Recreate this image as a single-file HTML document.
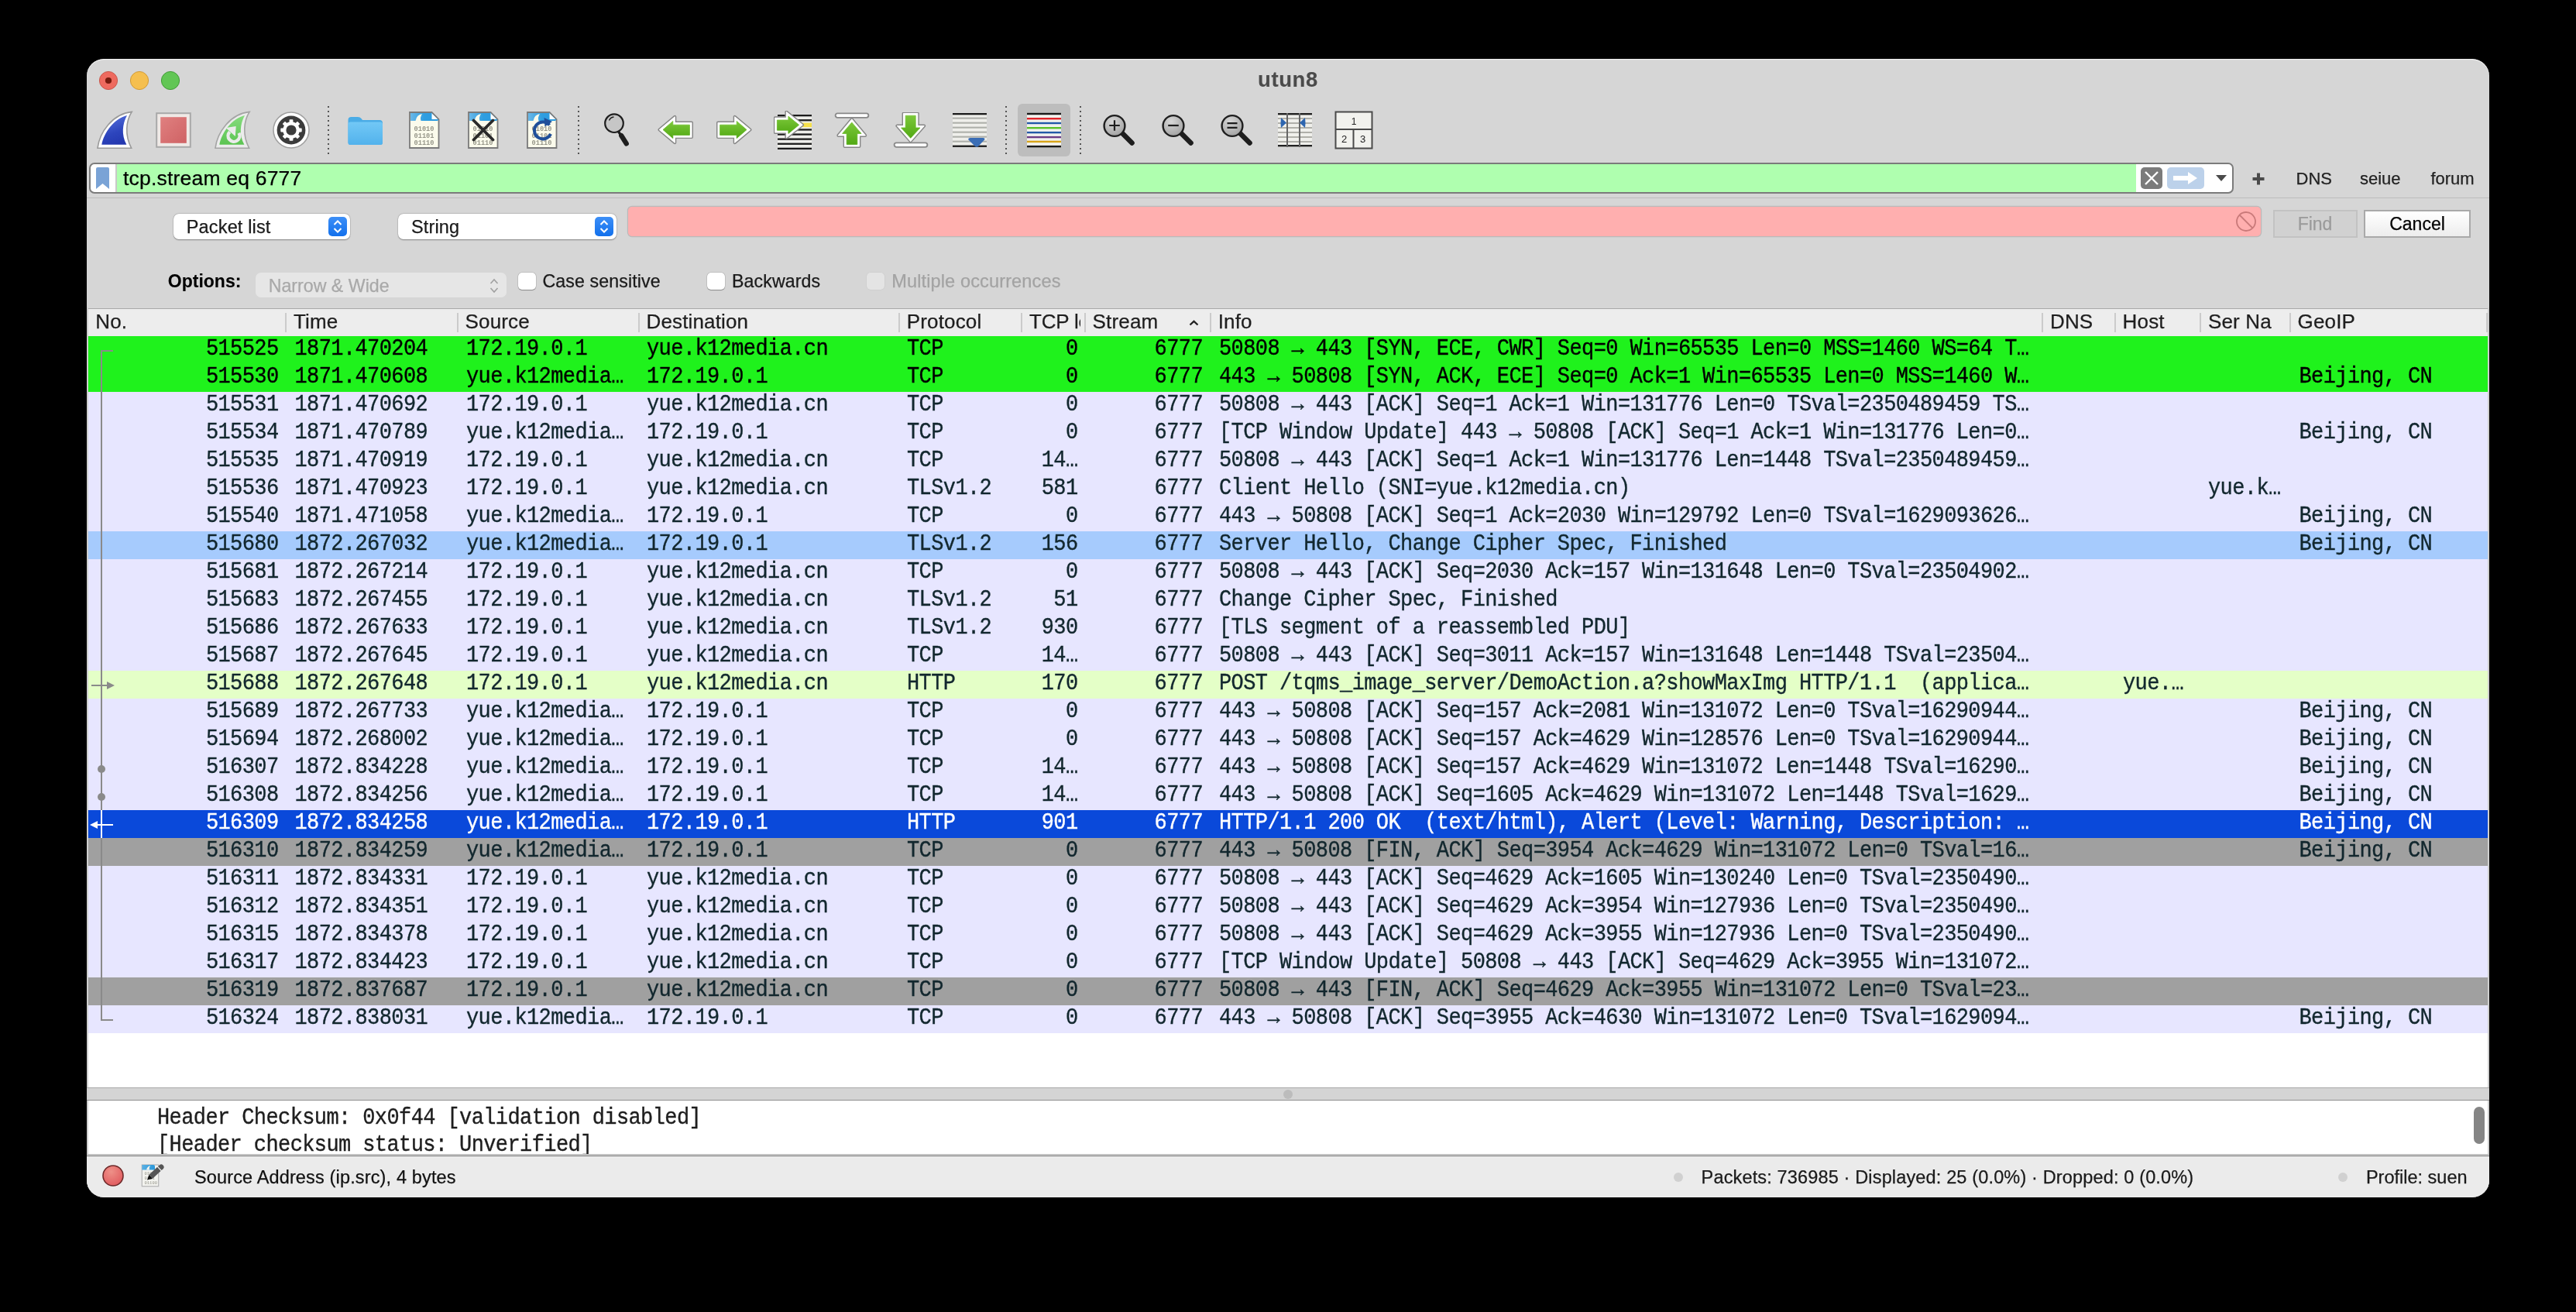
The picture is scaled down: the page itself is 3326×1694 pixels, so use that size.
<!DOCTYPE html>
<html><head><meta charset="utf-8"><title>utun8</title>
<style>
html,body{margin:0;padding:0;background:#000;width:3326px;height:1694px;overflow:hidden}
#win{position:absolute;left:112px;top:76px;width:3102px;height:1470px;background:#d6d6d6;border-radius:22px;overflow:hidden;will-change:transform}
#win div, #win svg{box-sizing:border-box}
</style></head><body>
<div id="win">
<svg style="position:absolute;left:15px;top:15px" width="26" height="26" viewBox="0 0 26 26"><circle cx="13" cy="13" r="11.6" fill="#ee6a5f" stroke="#c9574c" stroke-width="1"/><circle cx="13" cy="13" r="4.1" fill="#761a0e"/></svg>
<svg style="position:absolute;left:55px;top:15px" width="26" height="26" viewBox="0 0 26 26"><circle cx="13" cy="13" r="11.6" fill="#f5bf4f" stroke="#d19a36" stroke-width="1"/></svg>
<svg style="position:absolute;left:95px;top:15px" width="26" height="26" viewBox="0 0 26 26"><circle cx="13" cy="13" r="11.6" fill="#62c655" stroke="#429a37" stroke-width="1"/></svg>
<div style="position:absolute;left:1551px;top:10.71px;font-family:'Liberation Sans', sans-serif;font-size:27.5px;font-weight:700;color:#4b4b4b;letter-spacing:0.6px;white-space:pre;line-height:normal;-webkit-text-stroke:0.1px #4b4b4b;transform:translateX(-50%);">utun8</div>
<div style="position:absolute;left:0px;top:0px;width:3102px;height:44px;border-radius:22px 22px 0 0;box-shadow:inset 0 1.3px 0 #f0f0f0;"></div>
<svg style="position:absolute;left:12px;top:66px" width="50" height="52" viewBox="0 0 50 52">
<defs><linearGradient id="gb" x1="0.3" y1="0" x2="0.6" y2="1"><stop offset="0" stop-color="#5570dc"/><stop offset="0.6" stop-color="#2d45bd"/><stop offset="1" stop-color="#2438b0"/></linearGradient></defs>
<path d="M2 49.2 C4.5 29 21 5 46.2 2.4 C38.5 14 37 33 45.6 49.2 Z" fill="#fff" stroke="#9a9a9a" stroke-width="1.6"/>
<path d="M7.3 44.7 C10 30 23 11 40 7 C34 18 32.5 32 39.4 44.7 Z" fill="url(#gb)"/>
</svg>
<svg style="position:absolute;left:89px;top:69px" width="46" height="46" viewBox="0 0 46 46">
<rect x="1.2" y="1.2" width="43.6" height="43.6" fill="#efe9e6" stroke="#a9a9a9" stroke-width="2"/>
<defs><linearGradient id="gr" x1="0" y1="0" x2="1" y2="1"><stop offset="0" stop-color="#e08080"/><stop offset="1" stop-color="#cf6264"/></linearGradient></defs>
<rect x="6.2" y="6.2" width="33.6" height="33.6" fill="url(#gr)"/>
</svg>
<svg style="position:absolute;left:164px;top:66px" width="50" height="52" viewBox="0 0 50 52">
<defs><linearGradient id="gg" x1="0" y1="0" x2="0" y2="1"><stop offset="0" stop-color="#86dc7e"/><stop offset="1" stop-color="#5cc452"/></linearGradient></defs>
<path d="M2 49.2 C4.5 29 21 5 46.2 2.4 C38.5 14 37 33 45.6 49.2 Z" fill="#ececec" stroke="#a4a4a4" stroke-width="1.6"/>
<path d="M7.3 44.7 C10 30 23 11 40 7 C34 18 32.5 32 39.4 44.7 Z" fill="url(#gg)"/>
<path d="M32.45 29.8 A7.45 7.45 0 1 1 20.7 28.2" fill="none" stroke="#ebebeb" stroke-width="4.3"/>
<path d="M15.5 23 L28.7 20.9 L27.8 34 Z" fill="#ebebeb"/>
</svg>
<svg style="position:absolute;left:240px;top:68px" width="48" height="48" viewBox="0 0 48 48">
<circle cx="24" cy="24" r="23" fill="#fff" stroke="#a0a0a0" stroke-width="1.6"/>
<circle cx="24" cy="24" r="18.4" fill="#3c3c3c"/>
<rect x="21.6" y="10.3" width="4.8" height="6" rx="0.8" fill="#fff" transform="rotate(0 24 24)"/><rect x="21.6" y="10.3" width="4.8" height="6" rx="0.8" fill="#fff" transform="rotate(45 24 24)"/><rect x="21.6" y="10.3" width="4.8" height="6" rx="0.8" fill="#fff" transform="rotate(90 24 24)"/><rect x="21.6" y="10.3" width="4.8" height="6" rx="0.8" fill="#fff" transform="rotate(135 24 24)"/><rect x="21.6" y="10.3" width="4.8" height="6" rx="0.8" fill="#fff" transform="rotate(180 24 24)"/><rect x="21.6" y="10.3" width="4.8" height="6" rx="0.8" fill="#fff" transform="rotate(225 24 24)"/><rect x="21.6" y="10.3" width="4.8" height="6" rx="0.8" fill="#fff" transform="rotate(270 24 24)"/><rect x="21.6" y="10.3" width="4.8" height="6" rx="0.8" fill="#fff" transform="rotate(315 24 24)"/>
<circle cx="24" cy="24" r="10.8" fill="#fff"/>
<circle cx="24" cy="24" r="6.6" fill="#3c3c3c"/>
</svg>
<svg style="position:absolute;left:311px;top:60px" width="2" height="64" viewBox="0 0 2 64"><rect x="0" y="1" width="2" height="2" fill="#555"/><rect x="0" y="7" width="2" height="2" fill="#555"/><rect x="0" y="13" width="2" height="2" fill="#555"/><rect x="0" y="19" width="2" height="2" fill="#555"/><rect x="0" y="25" width="2" height="2" fill="#555"/><rect x="0" y="31" width="2" height="2" fill="#555"/><rect x="0" y="37" width="2" height="2" fill="#555"/><rect x="0" y="43" width="2" height="2" fill="#555"/><rect x="0" y="49" width="2" height="2" fill="#555"/><rect x="0" y="55" width="2" height="2" fill="#555"/><rect x="0" y="61" width="2" height="2" fill="#555"/></svg>
<svg style="position:absolute;left:336px;top:73px" width="48" height="40" viewBox="0 0 48 40">
<defs><linearGradient id="gf" x1="0" y1="0" x2="0" y2="1"><stop offset="0" stop-color="#72c8f6"/><stop offset="1" stop-color="#52b2ec"/></linearGradient></defs>
<path d="M1.5 6 Q1.5 2 5.5 2 L14 2 Q17 2 18.5 4 L20 6 L42 6 Q46 6 46 10 L46 35 Q46 38 43 38 L4.5 38 Q1.5 38 1.5 35 Z" fill="#4aace6"/>
<path d="M1.5 11.5 Q1.5 8.5 4.5 8.5 L43 8.5 Q46 8.5 46 11.5 L46 35 Q46 38 43 38 L4.5 38 Q1.5 38 1.5 35 Z" fill="url(#gf)"/>
</svg>
<svg style="position:absolute;left:416px;top:68px" width="40" height="49" viewBox="0 0 40 49">
<defs><linearGradient id="gfh528" x1="0" y1="0" x2="1" y2="0"><stop offset="0" stop-color="#6ab8e8"/><stop offset="0.5" stop-color="#2f9ee0"/><stop offset="1" stop-color="#2a9ae0"/></linearGradient></defs>
<path d="M1 1 L29.5 1 L38.5 10 L38.5 47 L1 47 Z" fill="#fbfbec" stroke="#7a7a7a" stroke-width="1.8"/>
<path d="M2 2 L29 2 L37.5 10.5 L37.5 12 L2 12 Z" fill="url(#gfh528)"/>
<path d="M29 2 L29 10.5 L37.6 10.5 Z" fill="#fff"/>
<path d="M29 1.5 L29 10.5 L38 10.5" fill="none" stroke="#2f9ee0" stroke-width="1"/>
<path d="M8.5 12 Q10 4 17 3 Q14 7.5 15.5 12 Z" fill="#fbfbec"/>
<g font-family="Liberation Mono" font-size="8.6" font-weight="700" fill="#97978a" text-anchor="middle">
<text x="19.5" y="24.5">01010</text><text x="19.5" y="33.5">01101</text><text x="19.5" y="42.5">01110</text></g>
</svg>
<svg style="position:absolute;left:492px;top:68px" width="40" height="49" viewBox="0 0 40 49">
<defs><linearGradient id="gfh604" x1="0" y1="0" x2="1" y2="0"><stop offset="0" stop-color="#6ab8e8"/><stop offset="0.5" stop-color="#2f9ee0"/><stop offset="1" stop-color="#2a9ae0"/></linearGradient></defs>
<path d="M1 1 L29.5 1 L38.5 10 L38.5 47 L1 47 Z" fill="#fbfbec" stroke="#7a7a7a" stroke-width="1.8"/>
<path d="M2 2 L29 2 L37.5 10.5 L37.5 12 L2 12 Z" fill="url(#gfh604)"/>
<path d="M29 2 L29 10.5 L37.6 10.5 Z" fill="#fff"/>
<path d="M29 1.5 L29 10.5 L38 10.5" fill="none" stroke="#2f9ee0" stroke-width="1"/>
<path d="M8.5 12 Q10 4 17 3 Q14 7.5 15.5 12 Z" fill="#fbfbec"/>
<g font-family="Liberation Mono" font-size="8.6" font-weight="700" fill="#97978a" text-anchor="middle">
<text x="19.5" y="24.5">01010</text><text x="19.5" y="33.5">01101</text><text x="19.5" y="42.5">01110</text></g>
<path d="M7.5 11.5 L32.5 36.5 M32.5 11.5 L7.5 36.5" stroke="#2a2a2a" stroke-width="3.8" stroke-linecap="round"/></svg>
<svg style="position:absolute;left:568px;top:68px" width="40" height="49" viewBox="0 0 40 49">
<defs><linearGradient id="gfh680" x1="0" y1="0" x2="1" y2="0"><stop offset="0" stop-color="#6ab8e8"/><stop offset="0.5" stop-color="#2f9ee0"/><stop offset="1" stop-color="#2a9ae0"/></linearGradient></defs>
<path d="M1 1 L29.5 1 L38.5 10 L38.5 47 L1 47 Z" fill="#fbfbec" stroke="#7a7a7a" stroke-width="1.8"/>
<path d="M2 2 L29 2 L37.5 10.5 L37.5 12 L2 12 Z" fill="url(#gfh680)"/>
<path d="M29 2 L29 10.5 L37.6 10.5 Z" fill="#fff"/>
<path d="M29 1.5 L29 10.5 L38 10.5" fill="none" stroke="#2f9ee0" stroke-width="1"/>
<path d="M8.5 12 Q10 4 17 3 Q14 7.5 15.5 12 Z" fill="#fbfbec"/>
<g font-family="Liberation Mono" font-size="8.6" font-weight="700" fill="#97978a" text-anchor="middle">
<text x="19.5" y="24.5">01010</text><text x="19.5" y="33.5">01101</text><text x="19.5" y="42.5">01110</text></g>
<path d="M29.5 17.5 A11 11 0 1 0 31 29" fill="none" stroke="#1f4f9a" stroke-width="4"/><path d="M22.5 8 L33 13 L23.5 19.5 Z" fill="#1f4f9a"/></svg>
<svg style="position:absolute;left:634px;top:60px" width="2" height="64" viewBox="0 0 2 64"><rect x="0" y="1" width="2" height="2" fill="#555"/><rect x="0" y="7" width="2" height="2" fill="#555"/><rect x="0" y="13" width="2" height="2" fill="#555"/><rect x="0" y="19" width="2" height="2" fill="#555"/><rect x="0" y="25" width="2" height="2" fill="#555"/><rect x="0" y="31" width="2" height="2" fill="#555"/><rect x="0" y="37" width="2" height="2" fill="#555"/><rect x="0" y="43" width="2" height="2" fill="#555"/><rect x="0" y="49" width="2" height="2" fill="#555"/><rect x="0" y="55" width="2" height="2" fill="#555"/><rect x="0" y="61" width="2" height="2" fill="#555"/></svg>
<svg style="position:absolute;left:666px;top:69px" width="36" height="46" viewBox="0 0 36 46">
<circle cx="15" cy="14.2" r="11.8" fill="#c6c6c6" stroke="#1e1e1e" stroke-width="2.2"/>
<path d="M8.5 10.5 Q10 6.5 14.5 6" stroke="#1e1e1e" stroke-width="1.4" fill="none"/>
<path d="M20.5 25 L23 28.5" stroke="#1e1e1e" stroke-width="3.2"/>
<path d="M24.2 30 L30.8 40.5" stroke="#1e1e1e" stroke-width="6.2" stroke-linecap="round"/>
</svg>
<svg style="position:absolute;left:737px;top:72px" width="46" height="39" viewBox="0 0 46 39"><defs><linearGradient id="gal" x1="0" y1="0" x2="0" y2="1"><stop offset="0" stop-color="#7cc83a"/><stop offset="1" stop-color="#52a914"/></linearGradient></defs><path d="M2.5 19.5 L22.3 2.8 L22.3 10.5 L44 10.5 L44 29.1 L22.3 29.1 L22.3 36.2 Z" fill="#fff" stroke="#868686" stroke-width="4" stroke-linejoin="round"/><path d="M2.5 19.5 L22.3 2.8 L22.3 10.5 L44 10.5 L44 29.1 L22.3 29.1 L22.3 36.2 Z" fill="#fff" stroke="#fff" stroke-width="1.1" stroke-linejoin="round"/><path d="M7 19.5 L19.8 8.4 L19.8 13.2 L41.4 13.2 L41.4 26.4 L19.8 26.4 L19.8 30.6 Z" fill="url(#gal)" stroke="url(#gal)" stroke-width="0.8" stroke-linejoin="round"/></svg>
<svg style="position:absolute;left:813px;top:72px" width="46" height="39" viewBox="0 0 46 39"><defs><linearGradient id="gar" x1="0" y1="0" x2="0" y2="1"><stop offset="0" stop-color="#7cc83a"/><stop offset="1" stop-color="#52a914"/></linearGradient></defs><path d="M43.5 19.5 L23.7 2.8 L23.7 10.5 L2 10.5 L2 29.1 L23.7 29.1 L23.7 36.2 Z" fill="#fff" stroke="#868686" stroke-width="4" stroke-linejoin="round"/><path d="M43.5 19.5 L23.7 2.8 L23.7 10.5 L2 10.5 L2 29.1 L23.7 29.1 L23.7 36.2 Z" fill="#fff" stroke="#fff" stroke-width="1.1" stroke-linejoin="round"/><path d="M39 19.5 L26.2 8.4 L26.2 13.2 L4.6 13.2 L4.6 26.4 L26.2 26.4 L26.2 30.6 Z" fill="url(#gar)" stroke="url(#gar)" stroke-width="0.8" stroke-linejoin="round"/></svg>
<svg style="position:absolute;left:887px;top:67px" width="50" height="50" viewBox="0 0 50 50"><defs><linearGradient id="gap" x1="0" y1="0" x2="0" y2="1"><stop offset="0" stop-color="#7cc83a"/><stop offset="1" stop-color="#52a914"/></linearGradient></defs><rect x="5" y="5" width="44" height="44.5" fill="#eeeeea"/><rect x="5" y="5.0" width="44" height="2.3" fill="#1c1c1c"/><rect x="5" y="11.1" width="44" height="2.3" fill="#1c1c1c"/><rect x="5" y="23.3" width="44" height="2.3" fill="#1c1c1c"/><rect x="5" y="29.4" width="44" height="2.3" fill="#1c1c1c"/><rect x="5" y="35.5" width="44" height="2.3" fill="#1c1c1c"/><rect x="5" y="41.6" width="44" height="2.3" fill="#1c1c1c"/><rect x="5" y="47.7" width="44" height="2.3" fill="#1c1c1c"/><rect x="37" y="15.6" width="12" height="5.6" fill="#f6e04a"/><path d="M37 18.3 L16.4 1.6 L16.4 9.3 L1.8 9.3 L1.8 27.9 L16.4 27.9 L16.4 34.6 Z" fill="#fff" stroke="#868686" stroke-width="4" stroke-linejoin="round"/><path d="M37 18.3 L16.4 1.6 L16.4 9.3 L1.8 9.3 L1.8 27.9 L16.4 27.9 L16.4 34.6 Z" fill="#fff" stroke="#fff" stroke-width="1.1" stroke-linejoin="round"/><path d="M32.6 18.3 L18.9 7.1 L18.9 12 L4.4 12 L4.4 25.2 L18.9 25.2 L18.9 29.4 Z" fill="url(#gap)" stroke="url(#gap)" stroke-width="0.8" stroke-linejoin="round"/></svg>
<svg style="position:absolute;left:965px;top:69px" width="46" height="46" viewBox="0 0 46 46"><defs><linearGradient id="gup" x1="0" y1="0" x2="0" y2="1"><stop offset="0" stop-color="#7cc83a"/><stop offset="1" stop-color="#52a914"/></linearGradient></defs><rect x="1.6" y="1.4" width="42.8" height="5.4" rx="2.7" fill="#fff" stroke="#888" stroke-width="1.8"/><path d="M22.8 9 L40.2 29.9 L32.4 29.9 L32.4 44 L13.6 44 L13.6 29.9 L5.4 29.9 Z" fill="#fff" stroke="#868686" stroke-width="4" stroke-linejoin="round"/><path d="M22.8 9 L40.2 29.9 L32.4 29.9 L32.4 44 L13.6 44 L13.6 29.9 L5.4 29.9 Z" fill="#fff" stroke="#fff" stroke-width="1.1" stroke-linejoin="round"/><path d="M22.8 13 L35 27.4 L29.8 27.4 L29.8 41.4 L16.2 41.4 L16.2 27.4 L10.6 27.4 Z" fill="url(#gup)" stroke="url(#gup)" stroke-width="0.8" stroke-linejoin="round"/></svg>
<svg style="position:absolute;left:1041px;top:69px" width="46" height="46" viewBox="0 0 46 46"><defs><linearGradient id="gdn" x1="0" y1="0" x2="0" y2="1"><stop offset="0" stop-color="#7cc83a"/><stop offset="1" stop-color="#52a914"/></linearGradient></defs><path d="M13.6 1.6 L31.8 1.6 L31.8 17.5 L40.2 17.5 L22.7 37.3 L5.4 17.5 L13.6 17.5 Z" fill="#fff" stroke="#868686" stroke-width="4" stroke-linejoin="round"/><path d="M13.6 1.6 L31.8 1.6 L31.8 17.5 L40.2 17.5 L22.7 37.3 L5.4 17.5 L13.6 17.5 Z" fill="#fff" stroke="#fff" stroke-width="1.1" stroke-linejoin="round"/><path d="M16.2 4.2 L29.2 4.2 L29.2 20 L35 20 L22.7 33.3 L10.6 20 L16.2 20 Z" fill="url(#gdn)" stroke="url(#gdn)" stroke-width="0.8" stroke-linejoin="round"/><rect x="1.6" y="39.4" width="42.8" height="5.4" rx="2.7" fill="#fff" stroke="#888" stroke-width="1.8"/></svg>
<svg style="position:absolute;left:1116px;top:69px" width="48" height="46" viewBox="0 0 48 46">
<rect x="2" y="1" width="44" height="43" fill="#efefeb"/>
<rect x="2" y="1" width="44" height="2.3" fill="#1c1c1c"/>
<rect x="2" y="6.6" width="44" height="2.1" fill="#aeb0aa"/><rect x="2" y="12.6" width="44" height="2.1" fill="#aeb0aa"/><rect x="2" y="18.6" width="44" height="2.1" fill="#aeb0aa"/><rect x="2" y="24.6" width="44" height="2.1" fill="#aeb0aa"/><rect x="2" y="30.6" width="44" height="2.1" fill="#aeb0aa"/><rect x="2" y="36.6" width="44" height="2.1" fill="#aeb0aa"/>
<rect x="2" y="42.6" width="44" height="2.3" fill="#1c1c1c"/>
<path d="M22.5 35.5 Q21.5 33 25 33 L41 33 Q44.5 33 43 35.6 L35.5 43.5 Q33 46 30.5 43.5 Z" fill="#3a6db5"/>
</svg>
<svg style="position:absolute;left:1186px;top:60px" width="2" height="64" viewBox="0 0 2 64"><rect x="0" y="1" width="2" height="2" fill="#555"/><rect x="0" y="7" width="2" height="2" fill="#555"/><rect x="0" y="13" width="2" height="2" fill="#555"/><rect x="0" y="19" width="2" height="2" fill="#555"/><rect x="0" y="25" width="2" height="2" fill="#555"/><rect x="0" y="31" width="2" height="2" fill="#555"/><rect x="0" y="37" width="2" height="2" fill="#555"/><rect x="0" y="43" width="2" height="2" fill="#555"/><rect x="0" y="49" width="2" height="2" fill="#555"/><rect x="0" y="55" width="2" height="2" fill="#555"/><rect x="0" y="61" width="2" height="2" fill="#555"/></svg>
<div style="position:absolute;left:1202px;top:58px;width:68px;height:67.5px;background:#bdbdbd;border-radius:6px;"></div>
<svg style="position:absolute;left:1213px;top:69px" width="46" height="46" viewBox="0 0 46 46"><rect x="1" y="1" width="44" height="44" fill="#f2f2ee"/><rect x="1" y="0.8" width="44" height="2.4" fill="#1a1a1a"/><rect x="1" y="7" width="44" height="2.4" fill="#e0242a"/><rect x="1" y="12.8" width="44" height="2.4" fill="#2459a8"/><rect x="1" y="19" width="44" height="2.4" fill="#5cc22a"/><rect x="1" y="24.9" width="44" height="2.4" fill="#2459a8"/><rect x="1" y="30.9" width="44" height="2.4" fill="#6b3a86"/><rect x="1" y="36.7" width="44" height="2.4" fill="#d8a418"/><rect x="1" y="42.9" width="44" height="2.4" fill="#1a1a1a"/></svg>
<svg style="position:absolute;left:1282px;top:60px" width="2" height="64" viewBox="0 0 2 64"><rect x="0" y="1" width="2" height="2" fill="#555"/><rect x="0" y="7" width="2" height="2" fill="#555"/><rect x="0" y="13" width="2" height="2" fill="#555"/><rect x="0" y="19" width="2" height="2" fill="#555"/><rect x="0" y="25" width="2" height="2" fill="#555"/><rect x="0" y="31" width="2" height="2" fill="#555"/><rect x="0" y="37" width="2" height="2" fill="#555"/><rect x="0" y="43" width="2" height="2" fill="#555"/><rect x="0" y="49" width="2" height="2" fill="#555"/><rect x="0" y="55" width="2" height="2" fill="#555"/><rect x="0" y="61" width="2" height="2" fill="#555"/></svg>
<svg style="position:absolute;left:1311px;top:70px" width="44" height="44" viewBox="0 0 44 44">
<defs><radialGradient id="gz1423" cx="0.4" cy="0.3" r="0.8"><stop offset="0" stop-color="#d8d8d8"/><stop offset="1" stop-color="#9c9c9c"/></radialGradient></defs>
<path d="M26.5 26.5 L38.5 38.5" stroke="#1e1e1e" stroke-width="6.6" stroke-linecap="round"/>
<circle cx="16" cy="16.5" r="13.4" fill="url(#gz1423)" stroke="#1e1e1e" stroke-width="2.4"/>
<path d="M16 9.2 V22.8 M9.2 16 H22.8" stroke="#1e1e1e" stroke-width="2.2"/></svg>
<svg style="position:absolute;left:1387px;top:70px" width="44" height="44" viewBox="0 0 44 44">
<defs><radialGradient id="gz1499" cx="0.4" cy="0.3" r="0.8"><stop offset="0" stop-color="#d8d8d8"/><stop offset="1" stop-color="#9c9c9c"/></radialGradient></defs>
<path d="M26.5 26.5 L38.5 38.5" stroke="#1e1e1e" stroke-width="6.6" stroke-linecap="round"/>
<circle cx="16" cy="16.5" r="13.4" fill="url(#gz1499)" stroke="#1e1e1e" stroke-width="2.4"/>
<path d="M9.2 16 H22.8" stroke="#1e1e1e" stroke-width="2.2"/></svg>
<svg style="position:absolute;left:1463px;top:70px" width="44" height="44" viewBox="0 0 44 44">
<defs><radialGradient id="gz1575" cx="0.4" cy="0.3" r="0.8"><stop offset="0" stop-color="#d8d8d8"/><stop offset="1" stop-color="#9c9c9c"/></radialGradient></defs>
<path d="M26.5 26.5 L38.5 38.5" stroke="#1e1e1e" stroke-width="6.6" stroke-linecap="round"/>
<circle cx="16" cy="16.5" r="13.4" fill="url(#gz1575)" stroke="#1e1e1e" stroke-width="2.4"/>
<path d="M9.5 13.2 H22.5 M9.5 18.8 H22.5" stroke="#1e1e1e" stroke-width="2.2"/></svg>
<svg style="position:absolute;left:1537px;top:69px" width="46" height="46" viewBox="0 0 46 46">
<rect x="1" y="1" width="44" height="44" fill="#f0f0ec"/><rect x="1" y="7" width="44" height="2" fill="#b0b0aa"/><rect x="1" y="13" width="44" height="2" fill="#b0b0aa"/><rect x="1" y="19" width="44" height="2" fill="#b0b0aa"/><rect x="1" y="25" width="44" height="2" fill="#b0b0aa"/><rect x="1" y="31" width="44" height="2" fill="#b0b0aa"/><rect x="1" y="37" width="44" height="2" fill="#b0b0aa"/>
<rect x="1" y="1" width="44" height="2.4" fill="#222"/><rect x="1" y="42" width="44" height="2.4" fill="#222"/>
<rect x="12" y="1" width="2" height="44" fill="#666"/><rect x="28" y="1" width="2" height="44" fill="#666"/>
<path d="M5 7 L12 13.5 L5 20 Q4 13.5 5 7 Z" fill="#2e66b0"/>
<path d="M36 7 L29 13.5 L36 20 Q37 13.5 36 7 Z" fill="#2e66b0"/>
</svg>
<svg style="position:absolute;left:1611px;top:67px" width="50" height="50" viewBox="0 0 50 50">
<rect x="1.5" y="1.5" width="47" height="47" fill="#f2f2ee" stroke="#4a4a4a" stroke-width="2"/>
<path d="M1.5 24 H48.5 M24.5 24 V48.5" stroke="#4a4a4a" stroke-width="2"/>
<text x="25" y="18" font-family="Liberation Sans" font-size="12" fill="#222" text-anchor="middle">1</text>
<text x="12.5" y="41" font-family="Liberation Sans" font-size="13" fill="#222" text-anchor="middle">2</text>
<text x="36.5" y="41" font-family="Liberation Sans" font-size="13" fill="#222" text-anchor="middle">3</text>
</svg>
<div style="position:absolute;left:2.5px;top:134px;width:2769.5px;height:39.6px;background:#fff;border:2px solid #7b7b7b;border-radius:7px;box-sizing:border-box;"></div>
<div style="position:absolute;left:38px;top:136px;width:2608px;height:35.6px;background:#afffaf;"></div>
<div style="position:absolute;left:37px;top:136px;width:1.5px;height:35.6px;background:#c8c8c8;"></div>
<svg style="position:absolute;left:12px;top:140px" width="17" height="29" viewBox="0 0 17 29"><path d="M0 2 Q0 0 2 0 L15 0 Q17 0 17 2 L17 28 L8.5 21 L0 28 Z" fill="#7aa3d6"/></svg>
<div style="position:absolute;left:47px;top:138.82px;font-family:'Liberation Sans', sans-serif;font-size:26.5px;font-weight:400;color:#000;letter-spacing:0.2px;white-space:pre;line-height:normal;-webkit-text-stroke:0.25px #000;">tcp.stream eq 6777</div>
<svg style="position:absolute;left:2652px;top:140px" width="28" height="28" viewBox="0 0 28 28"><rect x="0" y="0" width="28" height="28" rx="5" fill="#7b7b7b"/><path d="M6 6 L22 22 M22 6 L6 22" stroke="#fff" stroke-width="2.4"/></svg>
<svg style="position:absolute;left:2686px;top:140px" width="48" height="28" viewBox="0 0 48 28"><rect x="0" y="0" width="48" height="28" rx="5" fill="#bcd1ea"/><path d="M8 11 H27 V6 L39 14 L27 22 V17 H8 Z" fill="#fff"/></svg>
<svg style="position:absolute;left:2749px;top:150px" width="14" height="9" viewBox="0 0 14 9"><path d="M0 0 H14 L7 8 Z" fill="#4a4a4a"/></svg>
<svg style="position:absolute;left:2795px;top:146px" width="18" height="18" viewBox="0 0 18 18"><path d="M9 1.5 V16.5 M1.5 9 H16.5" stroke="#4a4a4a" stroke-width="4"/></svg>
<div style="position:absolute;left:2852.5px;top:142.29px;font-family:'Liberation Sans', sans-serif;font-size:22px;font-weight:400;color:#222;letter-spacing:0px;white-space:pre;line-height:normal;-webkit-text-stroke:0.25px #222;">DNS</div>
<div style="position:absolute;left:2935px;top:142.29px;font-family:'Liberation Sans', sans-serif;font-size:22px;font-weight:400;color:#222;letter-spacing:0px;white-space:pre;line-height:normal;-webkit-text-stroke:0.25px #222;">seiue</div>
<div style="position:absolute;left:3026.4px;top:142.29px;font-family:'Liberation Sans', sans-serif;font-size:22px;font-weight:400;color:#222;letter-spacing:0px;white-space:pre;line-height:normal;-webkit-text-stroke:0.25px #222;">forum</div>
<div style="position:absolute;left:0px;top:178.5px;width:3102px;height:1.5px;background:#bcbcbc;"></div>
<div style="position:absolute;left:112px;top:200px;width:228px;height:32.5px;background:#fff;border-radius:7px;box-shadow:0 0.5px 1.5px rgba(0,0,0,0.35),0 0 0 0.5px rgba(0,0,0,0.12);"></div>
<div style="position:absolute;left:128.8px;top:204.43px;font-family:'Liberation Sans', sans-serif;font-size:23.5px;font-weight:400;color:#1a1a1a;letter-spacing:0.15px;white-space:pre;line-height:normal;-webkit-text-stroke:0.25px #1a1a1a;">Packet list</div>
<svg style="position:absolute;left:311.5px;top:204px" width="24" height="25" viewBox="0 0 24 25"><defs><linearGradient id="gs224" x1="0" y1="0" x2="0" y2="1"><stop offset="0" stop-color="#3d8ff7"/><stop offset="1" stop-color="#1270ec"/></linearGradient></defs><rect x="0" y="0" width="24" height="25" rx="5" fill="url(#gs224)"/><path d="M7.5 10 L12 5.5 L16.5 10 M7.5 15 L12 19.5 L16.5 15" fill="none" stroke="#fff" stroke-width="2"/></svg>
<div style="position:absolute;left:402px;top:200px;width:282px;height:32.5px;background:#fff;border-radius:7px;box-shadow:0 0.5px 1.5px rgba(0,0,0,0.35),0 0 0 0.5px rgba(0,0,0,0.12);"></div>
<div style="position:absolute;left:419px;top:204.43px;font-family:'Liberation Sans', sans-serif;font-size:23.5px;font-weight:400;color:#1a1a1a;letter-spacing:0.15px;white-space:pre;line-height:normal;-webkit-text-stroke:0.25px #1a1a1a;">String</div>
<svg style="position:absolute;left:655.5px;top:204px" width="24" height="25" viewBox="0 0 24 25"><defs><linearGradient id="gs514" x1="0" y1="0" x2="0" y2="1"><stop offset="0" stop-color="#3d8ff7"/><stop offset="1" stop-color="#1270ec"/></linearGradient></defs><rect x="0" y="0" width="24" height="25" rx="5" fill="url(#gs514)"/><path d="M7.5 10 L12 5.5 L16.5 10 M7.5 15 L12 19.5 L16.5 15" fill="none" stroke="#fff" stroke-width="2"/></svg>
<div style="position:absolute;left:699px;top:191.2px;width:2108px;height:37.6px;background:#ffafaf;border-radius:5px;box-shadow:0 0 0 1.2px rgba(0,0,0,0.13);"></div>
<svg style="position:absolute;left:2774px;top:196px" width="28" height="28" viewBox="0 0 28 28"><circle cx="14" cy="14" r="12" fill="none" stroke="#c97a7a" stroke-width="1.8"/><path d="M5.5 5.5 L22.5 22.5" stroke="#c97a7a" stroke-width="1.8"/></svg>
<div style="position:absolute;left:2822.5px;top:195px;width:109.5px;height:35.5px;background:#d1d1d1;border:2px solid #c2c2c2;box-sizing:border-box;"></div>
<div style="position:absolute;left:2877px;top:200.19px;font-family:'Liberation Sans', sans-serif;font-size:23px;font-weight:400;color:#9b9b9b;letter-spacing:0px;white-space:pre;line-height:normal;-webkit-text-stroke:0.25px #9b9b9b;transform:translateX(-50%);">Find</div>
<div style="position:absolute;left:2940px;top:195px;width:138px;height:35.5px;background:linear-gradient(#fff,#ededed);border:2px solid #a9a9a9;box-sizing:border-box;"></div>
<div style="position:absolute;left:3009px;top:200.19px;font-family:'Liberation Sans', sans-serif;font-size:23px;font-weight:400;color:#000;letter-spacing:0px;white-space:pre;line-height:normal;-webkit-text-stroke:0.25px #000;transform:translateX(-50%);">Cancel</div>
<div style="position:absolute;left:104.8px;top:274.49px;font-family:'Liberation Sans', sans-serif;font-size:23px;font-weight:700;color:#000;letter-spacing:0px;white-space:pre;line-height:normal;-webkit-text-stroke:0.1px #000;">Options:</div>
<div style="position:absolute;left:218px;top:276px;width:324px;height:32px;background:#e6e6e6;border-radius:7px;"></div>
<div style="position:absolute;left:234.7px;top:280.00px;font-family:'Liberation Sans', sans-serif;font-size:23.2px;font-weight:400;color:#a9a9a9;letter-spacing:0px;white-space:pre;line-height:normal;-webkit-text-stroke:0.25px #a9a9a9;">Narrow &amp; Wide</div>
<svg style="position:absolute;left:520px;top:283px" width="12" height="20" viewBox="0 0 12 20"><path d="M1.5 7 L6 2 L10.5 7 M1.5 13 L6 18 L10.5 13" fill="none" stroke="#a0a0a0" stroke-width="1.6"/></svg>
<div style="position:absolute;left:557px;top:275.5px;width:22.5px;height:22.5px;background:#fff;border-radius:5px;box-shadow:0 0.5px 1px rgba(0,0,0,0.3),0 0 0 0.5px rgba(0,0,0,0.15);"></div>
<div style="position:absolute;left:588.5px;top:274.30px;font-family:'Liberation Sans', sans-serif;font-size:23.2px;font-weight:400;color:#1a1a1a;letter-spacing:0.1px;white-space:pre;line-height:normal;-webkit-text-stroke:0.25px #1a1a1a;">Case sensitive</div>
<div style="position:absolute;left:801px;top:275.5px;width:22.5px;height:22.5px;background:#fff;border-radius:5px;box-shadow:0 0.5px 1px rgba(0,0,0,0.3),0 0 0 0.5px rgba(0,0,0,0.15);"></div>
<div style="position:absolute;left:833px;top:274.30px;font-family:'Liberation Sans', sans-serif;font-size:23.2px;font-weight:400;color:#1a1a1a;letter-spacing:0.1px;white-space:pre;line-height:normal;-webkit-text-stroke:0.25px #1a1a1a;">Backwards</div>
<div style="position:absolute;left:1007px;top:275.5px;width:22.5px;height:22.5px;background:#e4e4e4;border-radius:5px;box-shadow:0 0 0 0.5px rgba(0,0,0,0.06);"></div>
<div style="position:absolute;left:1039.2px;top:273.94px;font-family:'Liberation Sans', sans-serif;font-size:23.6px;font-weight:400;color:#a3a3a3;letter-spacing:0.1px;white-space:pre;line-height:normal;-webkit-text-stroke:0.25px #a3a3a3;">Multiple occurrences</div>
<div style="position:absolute;left:0px;top:321.5px;width:3102px;height:1.5px;background:#a9a9a9;"></div>
<div style="position:absolute;left:2px;top:323px;width:3098px;height:35px;background:#ededed;"></div>
<div style="position:absolute;left:255.6px;top:327.5px;width:2.0px;height:25.0px;background:#cbcbcb;"></div>
<div style="position:absolute;left:477.7px;top:327.5px;width:2.0px;height:25.0px;background:#cbcbcb;"></div>
<div style="position:absolute;left:711.5px;top:327.5px;width:2.0px;height:25.0px;background:#cbcbcb;"></div>
<div style="position:absolute;left:1047.6px;top:327.5px;width:2.0px;height:25.0px;background:#cbcbcb;"></div>
<div style="position:absolute;left:1205.9px;top:327.5px;width:2.0px;height:25.0px;background:#cbcbcb;"></div>
<div style="position:absolute;left:1287.6px;top:327.5px;width:2.0px;height:25.0px;background:#cbcbcb;"></div>
<div style="position:absolute;left:1449.7px;top:327.5px;width:2.0px;height:25.0px;background:#cbcbcb;"></div>
<div style="position:absolute;left:2524px;top:327.5px;width:2px;height:25.0px;background:#cbcbcb;"></div>
<div style="position:absolute;left:2618px;top:327.5px;width:2px;height:25.0px;background:#cbcbcb;"></div>
<div style="position:absolute;left:2728px;top:327.5px;width:2px;height:25.0px;background:#cbcbcb;"></div>
<div style="position:absolute;left:2844px;top:327.5px;width:2px;height:25.0px;background:#cbcbcb;"></div>
<div style="position:absolute;left:3098px;top:327.5px;width:2px;height:25.0px;background:#cbcbcb;"></div>
<div style="position:absolute;left:11.3px;top:324.07px;font-family:'Liberation Sans', sans-serif;font-size:26px;font-weight:400;color:#1e1e1e;letter-spacing:0.15px;white-space:pre;line-height:normal;-webkit-text-stroke:0.25px #1e1e1e;">No.</div>
<div style="position:absolute;left:266.9px;top:324.07px;font-family:'Liberation Sans', sans-serif;font-size:26px;font-weight:400;color:#1e1e1e;letter-spacing:0.15px;white-space:pre;line-height:normal;-webkit-text-stroke:0.25px #1e1e1e;">Time</div>
<div style="position:absolute;left:488.6px;top:324.07px;font-family:'Liberation Sans', sans-serif;font-size:26px;font-weight:400;color:#1e1e1e;letter-spacing:0.15px;white-space:pre;line-height:normal;-webkit-text-stroke:0.25px #1e1e1e;">Source</div>
<div style="position:absolute;left:722.5px;top:324.07px;font-family:'Liberation Sans', sans-serif;font-size:26px;font-weight:400;color:#1e1e1e;letter-spacing:0.15px;white-space:pre;line-height:normal;-webkit-text-stroke:0.25px #1e1e1e;">Destination</div>
<div style="position:absolute;left:1058.8px;top:324.07px;font-family:'Liberation Sans', sans-serif;font-size:26px;font-weight:400;color:#1e1e1e;letter-spacing:0.15px;white-space:pre;line-height:normal;-webkit-text-stroke:0.25px #1e1e1e;">Protocol</div>
<div style="position:absolute;left:1298.6px;top:324.07px;font-family:'Liberation Sans', sans-serif;font-size:26px;font-weight:400;color:#1e1e1e;letter-spacing:0.15px;white-space:pre;line-height:normal;-webkit-text-stroke:0.25px #1e1e1e;">Stream</div>
<div style="position:absolute;left:1460.7px;top:324.07px;font-family:'Liberation Sans', sans-serif;font-size:26px;font-weight:400;color:#1e1e1e;letter-spacing:0.15px;white-space:pre;line-height:normal;-webkit-text-stroke:0.25px #1e1e1e;">Info</div>
<div style="position:absolute;left:2535px;top:324.07px;font-family:'Liberation Sans', sans-serif;font-size:26px;font-weight:400;color:#1e1e1e;letter-spacing:0.15px;white-space:pre;line-height:normal;-webkit-text-stroke:0.25px #1e1e1e;">DNS</div>
<div style="position:absolute;left:2628.6px;top:324.07px;font-family:'Liberation Sans', sans-serif;font-size:26px;font-weight:400;color:#1e1e1e;letter-spacing:0.15px;white-space:pre;line-height:normal;-webkit-text-stroke:0.25px #1e1e1e;">Host</div>
<div style="position:absolute;left:2739px;top:324.07px;font-family:'Liberation Sans', sans-serif;font-size:26px;font-weight:400;color:#1e1e1e;letter-spacing:0.15px;white-space:pre;line-height:normal;-webkit-text-stroke:0.25px #1e1e1e;">Ser Na</div>
<div style="position:absolute;left:2854.6px;top:324.07px;font-family:'Liberation Sans', sans-serif;font-size:26px;font-weight:400;color:#1e1e1e;letter-spacing:0.15px;white-space:pre;line-height:normal;-webkit-text-stroke:0.25px #1e1e1e;">GeoIP</div>
<div style="position:absolute;left:1215px;top:323px;width:67.5px;height:35px;overflow:hidden"><div style="position:absolute;left:2px;top:1.07px;font-family:'Liberation Sans', sans-serif;font-size:26px;color:#1e1e1e;white-space:pre;letter-spacing:-0.2px;-webkit-text-stroke:0.25px #1e1e1e">TCP len</div></div>
<svg style="position:absolute;left:1423px;top:337px" width="13" height="8" viewBox="0 0 13 8"><path d="M1.5 6.5 L6.5 1.8 L11.5 6.5" fill="none" stroke="#222" stroke-width="2.3"/></svg>
<div style="position:absolute;left:2px;top:358px;width:3098px;height:970px;background:#fff;"></div>
<div style="position:absolute;left:2px;top:358px;width:3098px;height:36px;background:#1ff21c;"></div>
<div style="position:absolute;left:153.9px;top:359.52px;font-family:'Liberation Mono', monospace;font-size:27px;font-weight:400;color:#000;letter-spacing:-0.6px;white-space:pre;line-height:normal;-webkit-text-stroke:0.35px #000;transform-origin:0 22.5px;transform:scaleY(1.07);">515525</div>
<div style="position:absolute;left:268.5px;top:359.52px;font-family:'Liberation Mono', monospace;font-size:27px;font-weight:400;color:#000;letter-spacing:-0.6px;white-space:pre;line-height:normal;-webkit-text-stroke:0.35px #000;transform-origin:0 22.5px;transform:scaleY(1.07);">1871.470204</div>
<div style="position:absolute;left:490px;top:359.52px;font-family:'Liberation Mono', monospace;font-size:27px;font-weight:400;color:#000;letter-spacing:-0.6px;white-space:pre;line-height:normal;-webkit-text-stroke:0.35px #000;transform-origin:0 22.5px;transform:scaleY(1.07);">172.19.0.1</div>
<div style="position:absolute;left:723px;top:359.52px;font-family:'Liberation Mono', monospace;font-size:27px;font-weight:400;color:#000;letter-spacing:-0.6px;white-space:pre;line-height:normal;-webkit-text-stroke:0.35px #000;transform-origin:0 22.5px;transform:scaleY(1.07);">yue.k12media.cn</div>
<div style="position:absolute;left:1059px;top:359.52px;font-family:'Liberation Mono', monospace;font-size:27px;font-weight:400;color:#000;letter-spacing:-0.6px;white-space:pre;line-height:normal;-webkit-text-stroke:0.35px #000;transform-origin:0 22.5px;transform:scaleY(1.07);">TCP</div>
<div style="position:absolute;left:1263.9px;top:359.52px;font-family:'Liberation Mono', monospace;font-size:27px;font-weight:400;color:#000;letter-spacing:-0.6px;white-space:pre;line-height:normal;-webkit-text-stroke:0.35px #000;transform-origin:0 22.5px;transform:scaleY(1.07);">0</div>
<div style="position:absolute;left:1378.6px;top:359.52px;font-family:'Liberation Mono', monospace;font-size:27px;font-weight:400;color:#000;letter-spacing:-0.6px;white-space:pre;line-height:normal;-webkit-text-stroke:0.35px #000;transform-origin:0 22.5px;transform:scaleY(1.07);">6777</div>
<div style="position:absolute;left:1462px;top:359.52px;font-family:'Liberation Mono', monospace;font-size:27px;font-weight:400;color:#000;letter-spacing:-0.6px;white-space:pre;line-height:normal;-webkit-text-stroke:0.35px #000;transform-origin:0 22.5px;transform:scaleY(1.07);">50808 → 443 [SYN, ECE, CWR] Seq=0 Win=65535 Len=0 MSS=1460 WS=64 T…</div>
<div style="position:absolute;left:2px;top:394px;width:3098px;height:36px;background:#1ff21c;"></div>
<div style="position:absolute;left:153.9px;top:395.52px;font-family:'Liberation Mono', monospace;font-size:27px;font-weight:400;color:#000;letter-spacing:-0.6px;white-space:pre;line-height:normal;-webkit-text-stroke:0.35px #000;transform-origin:0 22.5px;transform:scaleY(1.07);">515530</div>
<div style="position:absolute;left:268.5px;top:395.52px;font-family:'Liberation Mono', monospace;font-size:27px;font-weight:400;color:#000;letter-spacing:-0.6px;white-space:pre;line-height:normal;-webkit-text-stroke:0.35px #000;transform-origin:0 22.5px;transform:scaleY(1.07);">1871.470608</div>
<div style="position:absolute;left:490px;top:395.52px;font-family:'Liberation Mono', monospace;font-size:27px;font-weight:400;color:#000;letter-spacing:-0.6px;white-space:pre;line-height:normal;-webkit-text-stroke:0.35px #000;transform-origin:0 22.5px;transform:scaleY(1.07);">yue.k12media…</div>
<div style="position:absolute;left:723px;top:395.52px;font-family:'Liberation Mono', monospace;font-size:27px;font-weight:400;color:#000;letter-spacing:-0.6px;white-space:pre;line-height:normal;-webkit-text-stroke:0.35px #000;transform-origin:0 22.5px;transform:scaleY(1.07);">172.19.0.1</div>
<div style="position:absolute;left:1059px;top:395.52px;font-family:'Liberation Mono', monospace;font-size:27px;font-weight:400;color:#000;letter-spacing:-0.6px;white-space:pre;line-height:normal;-webkit-text-stroke:0.35px #000;transform-origin:0 22.5px;transform:scaleY(1.07);">TCP</div>
<div style="position:absolute;left:1263.9px;top:395.52px;font-family:'Liberation Mono', monospace;font-size:27px;font-weight:400;color:#000;letter-spacing:-0.6px;white-space:pre;line-height:normal;-webkit-text-stroke:0.35px #000;transform-origin:0 22.5px;transform:scaleY(1.07);">0</div>
<div style="position:absolute;left:1378.6px;top:395.52px;font-family:'Liberation Mono', monospace;font-size:27px;font-weight:400;color:#000;letter-spacing:-0.6px;white-space:pre;line-height:normal;-webkit-text-stroke:0.35px #000;transform-origin:0 22.5px;transform:scaleY(1.07);">6777</div>
<div style="position:absolute;left:1462px;top:395.52px;font-family:'Liberation Mono', monospace;font-size:27px;font-weight:400;color:#000;letter-spacing:-0.6px;white-space:pre;line-height:normal;-webkit-text-stroke:0.35px #000;transform-origin:0 22.5px;transform:scaleY(1.07);">443 → 50808 [SYN, ACK, ECE] Seq=0 Ack=1 Win=65535 Len=0 MSS=1460 W…</div>
<div style="position:absolute;left:2856.5px;top:395.52px;font-family:'Liberation Mono', monospace;font-size:27px;font-weight:400;color:#000;letter-spacing:-0.6px;white-space:pre;line-height:normal;-webkit-text-stroke:0.35px #000;transform-origin:0 22.5px;transform:scaleY(1.07);">Beijing, CN</div>
<div style="position:absolute;left:2px;top:430px;width:3098px;height:36px;background:#e7e6ff;"></div>
<div style="position:absolute;left:153.9px;top:431.52px;font-family:'Liberation Mono', monospace;font-size:27px;font-weight:400;color:#12272e;letter-spacing:-0.6px;white-space:pre;line-height:normal;-webkit-text-stroke:0.35px #12272e;transform-origin:0 22.5px;transform:scaleY(1.07);">515531</div>
<div style="position:absolute;left:268.5px;top:431.52px;font-family:'Liberation Mono', monospace;font-size:27px;font-weight:400;color:#12272e;letter-spacing:-0.6px;white-space:pre;line-height:normal;-webkit-text-stroke:0.35px #12272e;transform-origin:0 22.5px;transform:scaleY(1.07);">1871.470692</div>
<div style="position:absolute;left:490px;top:431.52px;font-family:'Liberation Mono', monospace;font-size:27px;font-weight:400;color:#12272e;letter-spacing:-0.6px;white-space:pre;line-height:normal;-webkit-text-stroke:0.35px #12272e;transform-origin:0 22.5px;transform:scaleY(1.07);">172.19.0.1</div>
<div style="position:absolute;left:723px;top:431.52px;font-family:'Liberation Mono', monospace;font-size:27px;font-weight:400;color:#12272e;letter-spacing:-0.6px;white-space:pre;line-height:normal;-webkit-text-stroke:0.35px #12272e;transform-origin:0 22.5px;transform:scaleY(1.07);">yue.k12media.cn</div>
<div style="position:absolute;left:1059px;top:431.52px;font-family:'Liberation Mono', monospace;font-size:27px;font-weight:400;color:#12272e;letter-spacing:-0.6px;white-space:pre;line-height:normal;-webkit-text-stroke:0.35px #12272e;transform-origin:0 22.5px;transform:scaleY(1.07);">TCP</div>
<div style="position:absolute;left:1263.9px;top:431.52px;font-family:'Liberation Mono', monospace;font-size:27px;font-weight:400;color:#12272e;letter-spacing:-0.6px;white-space:pre;line-height:normal;-webkit-text-stroke:0.35px #12272e;transform-origin:0 22.5px;transform:scaleY(1.07);">0</div>
<div style="position:absolute;left:1378.6px;top:431.52px;font-family:'Liberation Mono', monospace;font-size:27px;font-weight:400;color:#12272e;letter-spacing:-0.6px;white-space:pre;line-height:normal;-webkit-text-stroke:0.35px #12272e;transform-origin:0 22.5px;transform:scaleY(1.07);">6777</div>
<div style="position:absolute;left:1462px;top:431.52px;font-family:'Liberation Mono', monospace;font-size:27px;font-weight:400;color:#12272e;letter-spacing:-0.6px;white-space:pre;line-height:normal;-webkit-text-stroke:0.35px #12272e;transform-origin:0 22.5px;transform:scaleY(1.07);">50808 → 443 [ACK] Seq=1 Ack=1 Win=131776 Len=0 TSval=2350489459 TS…</div>
<div style="position:absolute;left:2px;top:466px;width:3098px;height:36px;background:#e7e6ff;"></div>
<div style="position:absolute;left:153.9px;top:467.52px;font-family:'Liberation Mono', monospace;font-size:27px;font-weight:400;color:#12272e;letter-spacing:-0.6px;white-space:pre;line-height:normal;-webkit-text-stroke:0.35px #12272e;transform-origin:0 22.5px;transform:scaleY(1.07);">515534</div>
<div style="position:absolute;left:268.5px;top:467.52px;font-family:'Liberation Mono', monospace;font-size:27px;font-weight:400;color:#12272e;letter-spacing:-0.6px;white-space:pre;line-height:normal;-webkit-text-stroke:0.35px #12272e;transform-origin:0 22.5px;transform:scaleY(1.07);">1871.470789</div>
<div style="position:absolute;left:490px;top:467.52px;font-family:'Liberation Mono', monospace;font-size:27px;font-weight:400;color:#12272e;letter-spacing:-0.6px;white-space:pre;line-height:normal;-webkit-text-stroke:0.35px #12272e;transform-origin:0 22.5px;transform:scaleY(1.07);">yue.k12media…</div>
<div style="position:absolute;left:723px;top:467.52px;font-family:'Liberation Mono', monospace;font-size:27px;font-weight:400;color:#12272e;letter-spacing:-0.6px;white-space:pre;line-height:normal;-webkit-text-stroke:0.35px #12272e;transform-origin:0 22.5px;transform:scaleY(1.07);">172.19.0.1</div>
<div style="position:absolute;left:1059px;top:467.52px;font-family:'Liberation Mono', monospace;font-size:27px;font-weight:400;color:#12272e;letter-spacing:-0.6px;white-space:pre;line-height:normal;-webkit-text-stroke:0.35px #12272e;transform-origin:0 22.5px;transform:scaleY(1.07);">TCP</div>
<div style="position:absolute;left:1263.9px;top:467.52px;font-family:'Liberation Mono', monospace;font-size:27px;font-weight:400;color:#12272e;letter-spacing:-0.6px;white-space:pre;line-height:normal;-webkit-text-stroke:0.35px #12272e;transform-origin:0 22.5px;transform:scaleY(1.07);">0</div>
<div style="position:absolute;left:1378.6px;top:467.52px;font-family:'Liberation Mono', monospace;font-size:27px;font-weight:400;color:#12272e;letter-spacing:-0.6px;white-space:pre;line-height:normal;-webkit-text-stroke:0.35px #12272e;transform-origin:0 22.5px;transform:scaleY(1.07);">6777</div>
<div style="position:absolute;left:1462px;top:467.52px;font-family:'Liberation Mono', monospace;font-size:27px;font-weight:400;color:#12272e;letter-spacing:-0.6px;white-space:pre;line-height:normal;-webkit-text-stroke:0.35px #12272e;transform-origin:0 22.5px;transform:scaleY(1.07);">[TCP Window Update] 443 → 50808 [ACK] Seq=1 Ack=1 Win=131776 Len=0…</div>
<div style="position:absolute;left:2856.5px;top:467.52px;font-family:'Liberation Mono', monospace;font-size:27px;font-weight:400;color:#12272e;letter-spacing:-0.6px;white-space:pre;line-height:normal;-webkit-text-stroke:0.35px #12272e;transform-origin:0 22.5px;transform:scaleY(1.07);">Beijing, CN</div>
<div style="position:absolute;left:2px;top:502px;width:3098px;height:36px;background:#e7e6ff;"></div>
<div style="position:absolute;left:153.9px;top:503.52px;font-family:'Liberation Mono', monospace;font-size:27px;font-weight:400;color:#12272e;letter-spacing:-0.6px;white-space:pre;line-height:normal;-webkit-text-stroke:0.35px #12272e;transform-origin:0 22.5px;transform:scaleY(1.07);">515535</div>
<div style="position:absolute;left:268.5px;top:503.52px;font-family:'Liberation Mono', monospace;font-size:27px;font-weight:400;color:#12272e;letter-spacing:-0.6px;white-space:pre;line-height:normal;-webkit-text-stroke:0.35px #12272e;transform-origin:0 22.5px;transform:scaleY(1.07);">1871.470919</div>
<div style="position:absolute;left:490px;top:503.52px;font-family:'Liberation Mono', monospace;font-size:27px;font-weight:400;color:#12272e;letter-spacing:-0.6px;white-space:pre;line-height:normal;-webkit-text-stroke:0.35px #12272e;transform-origin:0 22.5px;transform:scaleY(1.07);">172.19.0.1</div>
<div style="position:absolute;left:723px;top:503.52px;font-family:'Liberation Mono', monospace;font-size:27px;font-weight:400;color:#12272e;letter-spacing:-0.6px;white-space:pre;line-height:normal;-webkit-text-stroke:0.35px #12272e;transform-origin:0 22.5px;transform:scaleY(1.07);">yue.k12media.cn</div>
<div style="position:absolute;left:1059px;top:503.52px;font-family:'Liberation Mono', monospace;font-size:27px;font-weight:400;color:#12272e;letter-spacing:-0.6px;white-space:pre;line-height:normal;-webkit-text-stroke:0.35px #12272e;transform-origin:0 22.5px;transform:scaleY(1.07);">TCP</div>
<div style="position:absolute;left:1232.7px;top:503.52px;font-family:'Liberation Mono', monospace;font-size:27px;font-weight:400;color:#12272e;letter-spacing:-0.6px;white-space:pre;line-height:normal;-webkit-text-stroke:0.35px #12272e;transform-origin:0 22.5px;transform:scaleY(1.07);">14…</div>
<div style="position:absolute;left:1378.6px;top:503.52px;font-family:'Liberation Mono', monospace;font-size:27px;font-weight:400;color:#12272e;letter-spacing:-0.6px;white-space:pre;line-height:normal;-webkit-text-stroke:0.35px #12272e;transform-origin:0 22.5px;transform:scaleY(1.07);">6777</div>
<div style="position:absolute;left:1462px;top:503.52px;font-family:'Liberation Mono', monospace;font-size:27px;font-weight:400;color:#12272e;letter-spacing:-0.6px;white-space:pre;line-height:normal;-webkit-text-stroke:0.35px #12272e;transform-origin:0 22.5px;transform:scaleY(1.07);">50808 → 443 [ACK] Seq=1 Ack=1 Win=131776 Len=1448 TSval=2350489459…</div>
<div style="position:absolute;left:2px;top:538px;width:3098px;height:36px;background:#e7e6ff;"></div>
<div style="position:absolute;left:153.9px;top:539.52px;font-family:'Liberation Mono', monospace;font-size:27px;font-weight:400;color:#12272e;letter-spacing:-0.6px;white-space:pre;line-height:normal;-webkit-text-stroke:0.35px #12272e;transform-origin:0 22.5px;transform:scaleY(1.07);">515536</div>
<div style="position:absolute;left:268.5px;top:539.52px;font-family:'Liberation Mono', monospace;font-size:27px;font-weight:400;color:#12272e;letter-spacing:-0.6px;white-space:pre;line-height:normal;-webkit-text-stroke:0.35px #12272e;transform-origin:0 22.5px;transform:scaleY(1.07);">1871.470923</div>
<div style="position:absolute;left:490px;top:539.52px;font-family:'Liberation Mono', monospace;font-size:27px;font-weight:400;color:#12272e;letter-spacing:-0.6px;white-space:pre;line-height:normal;-webkit-text-stroke:0.35px #12272e;transform-origin:0 22.5px;transform:scaleY(1.07);">172.19.0.1</div>
<div style="position:absolute;left:723px;top:539.52px;font-family:'Liberation Mono', monospace;font-size:27px;font-weight:400;color:#12272e;letter-spacing:-0.6px;white-space:pre;line-height:normal;-webkit-text-stroke:0.35px #12272e;transform-origin:0 22.5px;transform:scaleY(1.07);">yue.k12media.cn</div>
<div style="position:absolute;left:1059px;top:539.52px;font-family:'Liberation Mono', monospace;font-size:27px;font-weight:400;color:#12272e;letter-spacing:-0.6px;white-space:pre;line-height:normal;-webkit-text-stroke:0.35px #12272e;transform-origin:0 22.5px;transform:scaleY(1.07);">TLSv1.2</div>
<div style="position:absolute;left:1232.7px;top:539.52px;font-family:'Liberation Mono', monospace;font-size:27px;font-weight:400;color:#12272e;letter-spacing:-0.6px;white-space:pre;line-height:normal;-webkit-text-stroke:0.35px #12272e;transform-origin:0 22.5px;transform:scaleY(1.07);">581</div>
<div style="position:absolute;left:1378.6px;top:539.52px;font-family:'Liberation Mono', monospace;font-size:27px;font-weight:400;color:#12272e;letter-spacing:-0.6px;white-space:pre;line-height:normal;-webkit-text-stroke:0.35px #12272e;transform-origin:0 22.5px;transform:scaleY(1.07);">6777</div>
<div style="position:absolute;left:1462px;top:539.52px;font-family:'Liberation Mono', monospace;font-size:27px;font-weight:400;color:#12272e;letter-spacing:-0.6px;white-space:pre;line-height:normal;-webkit-text-stroke:0.35px #12272e;transform-origin:0 22.5px;transform:scaleY(1.07);">Client Hello (SNI=yue.k12media.cn)</div>
<div style="position:absolute;left:2739px;top:539.52px;font-family:'Liberation Mono', monospace;font-size:27px;font-weight:400;color:#12272e;letter-spacing:-0.6px;white-space:pre;line-height:normal;-webkit-text-stroke:0.35px #12272e;transform-origin:0 22.5px;transform:scaleY(1.07);">yue.k…</div>
<div style="position:absolute;left:2px;top:574px;width:3098px;height:36px;background:#e7e6ff;"></div>
<div style="position:absolute;left:153.9px;top:575.52px;font-family:'Liberation Mono', monospace;font-size:27px;font-weight:400;color:#12272e;letter-spacing:-0.6px;white-space:pre;line-height:normal;-webkit-text-stroke:0.35px #12272e;transform-origin:0 22.5px;transform:scaleY(1.07);">515540</div>
<div style="position:absolute;left:268.5px;top:575.52px;font-family:'Liberation Mono', monospace;font-size:27px;font-weight:400;color:#12272e;letter-spacing:-0.6px;white-space:pre;line-height:normal;-webkit-text-stroke:0.35px #12272e;transform-origin:0 22.5px;transform:scaleY(1.07);">1871.471058</div>
<div style="position:absolute;left:490px;top:575.52px;font-family:'Liberation Mono', monospace;font-size:27px;font-weight:400;color:#12272e;letter-spacing:-0.6px;white-space:pre;line-height:normal;-webkit-text-stroke:0.35px #12272e;transform-origin:0 22.5px;transform:scaleY(1.07);">yue.k12media…</div>
<div style="position:absolute;left:723px;top:575.52px;font-family:'Liberation Mono', monospace;font-size:27px;font-weight:400;color:#12272e;letter-spacing:-0.6px;white-space:pre;line-height:normal;-webkit-text-stroke:0.35px #12272e;transform-origin:0 22.5px;transform:scaleY(1.07);">172.19.0.1</div>
<div style="position:absolute;left:1059px;top:575.52px;font-family:'Liberation Mono', monospace;font-size:27px;font-weight:400;color:#12272e;letter-spacing:-0.6px;white-space:pre;line-height:normal;-webkit-text-stroke:0.35px #12272e;transform-origin:0 22.5px;transform:scaleY(1.07);">TCP</div>
<div style="position:absolute;left:1263.9px;top:575.52px;font-family:'Liberation Mono', monospace;font-size:27px;font-weight:400;color:#12272e;letter-spacing:-0.6px;white-space:pre;line-height:normal;-webkit-text-stroke:0.35px #12272e;transform-origin:0 22.5px;transform:scaleY(1.07);">0</div>
<div style="position:absolute;left:1378.6px;top:575.52px;font-family:'Liberation Mono', monospace;font-size:27px;font-weight:400;color:#12272e;letter-spacing:-0.6px;white-space:pre;line-height:normal;-webkit-text-stroke:0.35px #12272e;transform-origin:0 22.5px;transform:scaleY(1.07);">6777</div>
<div style="position:absolute;left:1462px;top:575.52px;font-family:'Liberation Mono', monospace;font-size:27px;font-weight:400;color:#12272e;letter-spacing:-0.6px;white-space:pre;line-height:normal;-webkit-text-stroke:0.35px #12272e;transform-origin:0 22.5px;transform:scaleY(1.07);">443 → 50808 [ACK] Seq=1 Ack=2030 Win=129792 Len=0 TSval=1629093626…</div>
<div style="position:absolute;left:2856.5px;top:575.52px;font-family:'Liberation Mono', monospace;font-size:27px;font-weight:400;color:#12272e;letter-spacing:-0.6px;white-space:pre;line-height:normal;-webkit-text-stroke:0.35px #12272e;transform-origin:0 22.5px;transform:scaleY(1.07);">Beijing, CN</div>
<div style="position:absolute;left:2px;top:610px;width:3098px;height:36px;background:#a6cbfd;"></div>
<div style="position:absolute;left:153.9px;top:611.52px;font-family:'Liberation Mono', monospace;font-size:27px;font-weight:400;color:#12272e;letter-spacing:-0.6px;white-space:pre;line-height:normal;-webkit-text-stroke:0.35px #12272e;transform-origin:0 22.5px;transform:scaleY(1.07);">515680</div>
<div style="position:absolute;left:268.5px;top:611.52px;font-family:'Liberation Mono', monospace;font-size:27px;font-weight:400;color:#12272e;letter-spacing:-0.6px;white-space:pre;line-height:normal;-webkit-text-stroke:0.35px #12272e;transform-origin:0 22.5px;transform:scaleY(1.07);">1872.267032</div>
<div style="position:absolute;left:490px;top:611.52px;font-family:'Liberation Mono', monospace;font-size:27px;font-weight:400;color:#12272e;letter-spacing:-0.6px;white-space:pre;line-height:normal;-webkit-text-stroke:0.35px #12272e;transform-origin:0 22.5px;transform:scaleY(1.07);">yue.k12media…</div>
<div style="position:absolute;left:723px;top:611.52px;font-family:'Liberation Mono', monospace;font-size:27px;font-weight:400;color:#12272e;letter-spacing:-0.6px;white-space:pre;line-height:normal;-webkit-text-stroke:0.35px #12272e;transform-origin:0 22.5px;transform:scaleY(1.07);">172.19.0.1</div>
<div style="position:absolute;left:1059px;top:611.52px;font-family:'Liberation Mono', monospace;font-size:27px;font-weight:400;color:#12272e;letter-spacing:-0.6px;white-space:pre;line-height:normal;-webkit-text-stroke:0.35px #12272e;transform-origin:0 22.5px;transform:scaleY(1.07);">TLSv1.2</div>
<div style="position:absolute;left:1232.7px;top:611.52px;font-family:'Liberation Mono', monospace;font-size:27px;font-weight:400;color:#12272e;letter-spacing:-0.6px;white-space:pre;line-height:normal;-webkit-text-stroke:0.35px #12272e;transform-origin:0 22.5px;transform:scaleY(1.07);">156</div>
<div style="position:absolute;left:1378.6px;top:611.52px;font-family:'Liberation Mono', monospace;font-size:27px;font-weight:400;color:#12272e;letter-spacing:-0.6px;white-space:pre;line-height:normal;-webkit-text-stroke:0.35px #12272e;transform-origin:0 22.5px;transform:scaleY(1.07);">6777</div>
<div style="position:absolute;left:1462px;top:611.52px;font-family:'Liberation Mono', monospace;font-size:27px;font-weight:400;color:#12272e;letter-spacing:-0.6px;white-space:pre;line-height:normal;-webkit-text-stroke:0.35px #12272e;transform-origin:0 22.5px;transform:scaleY(1.07);">Server Hello, Change Cipher Spec, Finished</div>
<div style="position:absolute;left:2856.5px;top:611.52px;font-family:'Liberation Mono', monospace;font-size:27px;font-weight:400;color:#12272e;letter-spacing:-0.6px;white-space:pre;line-height:normal;-webkit-text-stroke:0.35px #12272e;transform-origin:0 22.5px;transform:scaleY(1.07);">Beijing, CN</div>
<div style="position:absolute;left:2px;top:646px;width:3098px;height:36px;background:#e7e6ff;"></div>
<div style="position:absolute;left:153.9px;top:647.52px;font-family:'Liberation Mono', monospace;font-size:27px;font-weight:400;color:#12272e;letter-spacing:-0.6px;white-space:pre;line-height:normal;-webkit-text-stroke:0.35px #12272e;transform-origin:0 22.5px;transform:scaleY(1.07);">515681</div>
<div style="position:absolute;left:268.5px;top:647.52px;font-family:'Liberation Mono', monospace;font-size:27px;font-weight:400;color:#12272e;letter-spacing:-0.6px;white-space:pre;line-height:normal;-webkit-text-stroke:0.35px #12272e;transform-origin:0 22.5px;transform:scaleY(1.07);">1872.267214</div>
<div style="position:absolute;left:490px;top:647.52px;font-family:'Liberation Mono', monospace;font-size:27px;font-weight:400;color:#12272e;letter-spacing:-0.6px;white-space:pre;line-height:normal;-webkit-text-stroke:0.35px #12272e;transform-origin:0 22.5px;transform:scaleY(1.07);">172.19.0.1</div>
<div style="position:absolute;left:723px;top:647.52px;font-family:'Liberation Mono', monospace;font-size:27px;font-weight:400;color:#12272e;letter-spacing:-0.6px;white-space:pre;line-height:normal;-webkit-text-stroke:0.35px #12272e;transform-origin:0 22.5px;transform:scaleY(1.07);">yue.k12media.cn</div>
<div style="position:absolute;left:1059px;top:647.52px;font-family:'Liberation Mono', monospace;font-size:27px;font-weight:400;color:#12272e;letter-spacing:-0.6px;white-space:pre;line-height:normal;-webkit-text-stroke:0.35px #12272e;transform-origin:0 22.5px;transform:scaleY(1.07);">TCP</div>
<div style="position:absolute;left:1263.9px;top:647.52px;font-family:'Liberation Mono', monospace;font-size:27px;font-weight:400;color:#12272e;letter-spacing:-0.6px;white-space:pre;line-height:normal;-webkit-text-stroke:0.35px #12272e;transform-origin:0 22.5px;transform:scaleY(1.07);">0</div>
<div style="position:absolute;left:1378.6px;top:647.52px;font-family:'Liberation Mono', monospace;font-size:27px;font-weight:400;color:#12272e;letter-spacing:-0.6px;white-space:pre;line-height:normal;-webkit-text-stroke:0.35px #12272e;transform-origin:0 22.5px;transform:scaleY(1.07);">6777</div>
<div style="position:absolute;left:1462px;top:647.52px;font-family:'Liberation Mono', monospace;font-size:27px;font-weight:400;color:#12272e;letter-spacing:-0.6px;white-space:pre;line-height:normal;-webkit-text-stroke:0.35px #12272e;transform-origin:0 22.5px;transform:scaleY(1.07);">50808 → 443 [ACK] Seq=2030 Ack=157 Win=131648 Len=0 TSval=23504902…</div>
<div style="position:absolute;left:2px;top:682px;width:3098px;height:36px;background:#e7e6ff;"></div>
<div style="position:absolute;left:153.9px;top:683.52px;font-family:'Liberation Mono', monospace;font-size:27px;font-weight:400;color:#12272e;letter-spacing:-0.6px;white-space:pre;line-height:normal;-webkit-text-stroke:0.35px #12272e;transform-origin:0 22.5px;transform:scaleY(1.07);">515683</div>
<div style="position:absolute;left:268.5px;top:683.52px;font-family:'Liberation Mono', monospace;font-size:27px;font-weight:400;color:#12272e;letter-spacing:-0.6px;white-space:pre;line-height:normal;-webkit-text-stroke:0.35px #12272e;transform-origin:0 22.5px;transform:scaleY(1.07);">1872.267455</div>
<div style="position:absolute;left:490px;top:683.52px;font-family:'Liberation Mono', monospace;font-size:27px;font-weight:400;color:#12272e;letter-spacing:-0.6px;white-space:pre;line-height:normal;-webkit-text-stroke:0.35px #12272e;transform-origin:0 22.5px;transform:scaleY(1.07);">172.19.0.1</div>
<div style="position:absolute;left:723px;top:683.52px;font-family:'Liberation Mono', monospace;font-size:27px;font-weight:400;color:#12272e;letter-spacing:-0.6px;white-space:pre;line-height:normal;-webkit-text-stroke:0.35px #12272e;transform-origin:0 22.5px;transform:scaleY(1.07);">yue.k12media.cn</div>
<div style="position:absolute;left:1059px;top:683.52px;font-family:'Liberation Mono', monospace;font-size:27px;font-weight:400;color:#12272e;letter-spacing:-0.6px;white-space:pre;line-height:normal;-webkit-text-stroke:0.35px #12272e;transform-origin:0 22.5px;transform:scaleY(1.07);">TLSv1.2</div>
<div style="position:absolute;left:1248.3px;top:683.52px;font-family:'Liberation Mono', monospace;font-size:27px;font-weight:400;color:#12272e;letter-spacing:-0.6px;white-space:pre;line-height:normal;-webkit-text-stroke:0.35px #12272e;transform-origin:0 22.5px;transform:scaleY(1.07);">51</div>
<div style="position:absolute;left:1378.6px;top:683.52px;font-family:'Liberation Mono', monospace;font-size:27px;font-weight:400;color:#12272e;letter-spacing:-0.6px;white-space:pre;line-height:normal;-webkit-text-stroke:0.35px #12272e;transform-origin:0 22.5px;transform:scaleY(1.07);">6777</div>
<div style="position:absolute;left:1462px;top:683.52px;font-family:'Liberation Mono', monospace;font-size:27px;font-weight:400;color:#12272e;letter-spacing:-0.6px;white-space:pre;line-height:normal;-webkit-text-stroke:0.35px #12272e;transform-origin:0 22.5px;transform:scaleY(1.07);">Change Cipher Spec, Finished</div>
<div style="position:absolute;left:2px;top:718px;width:3098px;height:36px;background:#e7e6ff;"></div>
<div style="position:absolute;left:153.9px;top:719.52px;font-family:'Liberation Mono', monospace;font-size:27px;font-weight:400;color:#12272e;letter-spacing:-0.6px;white-space:pre;line-height:normal;-webkit-text-stroke:0.35px #12272e;transform-origin:0 22.5px;transform:scaleY(1.07);">515686</div>
<div style="position:absolute;left:268.5px;top:719.52px;font-family:'Liberation Mono', monospace;font-size:27px;font-weight:400;color:#12272e;letter-spacing:-0.6px;white-space:pre;line-height:normal;-webkit-text-stroke:0.35px #12272e;transform-origin:0 22.5px;transform:scaleY(1.07);">1872.267633</div>
<div style="position:absolute;left:490px;top:719.52px;font-family:'Liberation Mono', monospace;font-size:27px;font-weight:400;color:#12272e;letter-spacing:-0.6px;white-space:pre;line-height:normal;-webkit-text-stroke:0.35px #12272e;transform-origin:0 22.5px;transform:scaleY(1.07);">172.19.0.1</div>
<div style="position:absolute;left:723px;top:719.52px;font-family:'Liberation Mono', monospace;font-size:27px;font-weight:400;color:#12272e;letter-spacing:-0.6px;white-space:pre;line-height:normal;-webkit-text-stroke:0.35px #12272e;transform-origin:0 22.5px;transform:scaleY(1.07);">yue.k12media.cn</div>
<div style="position:absolute;left:1059px;top:719.52px;font-family:'Liberation Mono', monospace;font-size:27px;font-weight:400;color:#12272e;letter-spacing:-0.6px;white-space:pre;line-height:normal;-webkit-text-stroke:0.35px #12272e;transform-origin:0 22.5px;transform:scaleY(1.07);">TLSv1.2</div>
<div style="position:absolute;left:1232.7px;top:719.52px;font-family:'Liberation Mono', monospace;font-size:27px;font-weight:400;color:#12272e;letter-spacing:-0.6px;white-space:pre;line-height:normal;-webkit-text-stroke:0.35px #12272e;transform-origin:0 22.5px;transform:scaleY(1.07);">930</div>
<div style="position:absolute;left:1378.6px;top:719.52px;font-family:'Liberation Mono', monospace;font-size:27px;font-weight:400;color:#12272e;letter-spacing:-0.6px;white-space:pre;line-height:normal;-webkit-text-stroke:0.35px #12272e;transform-origin:0 22.5px;transform:scaleY(1.07);">6777</div>
<div style="position:absolute;left:1462px;top:719.52px;font-family:'Liberation Mono', monospace;font-size:27px;font-weight:400;color:#12272e;letter-spacing:-0.6px;white-space:pre;line-height:normal;-webkit-text-stroke:0.35px #12272e;transform-origin:0 22.5px;transform:scaleY(1.07);">[TLS segment of a reassembled PDU]</div>
<div style="position:absolute;left:2px;top:754px;width:3098px;height:36px;background:#e7e6ff;"></div>
<div style="position:absolute;left:153.9px;top:755.52px;font-family:'Liberation Mono', monospace;font-size:27px;font-weight:400;color:#12272e;letter-spacing:-0.6px;white-space:pre;line-height:normal;-webkit-text-stroke:0.35px #12272e;transform-origin:0 22.5px;transform:scaleY(1.07);">515687</div>
<div style="position:absolute;left:268.5px;top:755.52px;font-family:'Liberation Mono', monospace;font-size:27px;font-weight:400;color:#12272e;letter-spacing:-0.6px;white-space:pre;line-height:normal;-webkit-text-stroke:0.35px #12272e;transform-origin:0 22.5px;transform:scaleY(1.07);">1872.267645</div>
<div style="position:absolute;left:490px;top:755.52px;font-family:'Liberation Mono', monospace;font-size:27px;font-weight:400;color:#12272e;letter-spacing:-0.6px;white-space:pre;line-height:normal;-webkit-text-stroke:0.35px #12272e;transform-origin:0 22.5px;transform:scaleY(1.07);">172.19.0.1</div>
<div style="position:absolute;left:723px;top:755.52px;font-family:'Liberation Mono', monospace;font-size:27px;font-weight:400;color:#12272e;letter-spacing:-0.6px;white-space:pre;line-height:normal;-webkit-text-stroke:0.35px #12272e;transform-origin:0 22.5px;transform:scaleY(1.07);">yue.k12media.cn</div>
<div style="position:absolute;left:1059px;top:755.52px;font-family:'Liberation Mono', monospace;font-size:27px;font-weight:400;color:#12272e;letter-spacing:-0.6px;white-space:pre;line-height:normal;-webkit-text-stroke:0.35px #12272e;transform-origin:0 22.5px;transform:scaleY(1.07);">TCP</div>
<div style="position:absolute;left:1232.7px;top:755.52px;font-family:'Liberation Mono', monospace;font-size:27px;font-weight:400;color:#12272e;letter-spacing:-0.6px;white-space:pre;line-height:normal;-webkit-text-stroke:0.35px #12272e;transform-origin:0 22.5px;transform:scaleY(1.07);">14…</div>
<div style="position:absolute;left:1378.6px;top:755.52px;font-family:'Liberation Mono', monospace;font-size:27px;font-weight:400;color:#12272e;letter-spacing:-0.6px;white-space:pre;line-height:normal;-webkit-text-stroke:0.35px #12272e;transform-origin:0 22.5px;transform:scaleY(1.07);">6777</div>
<div style="position:absolute;left:1462px;top:755.52px;font-family:'Liberation Mono', monospace;font-size:27px;font-weight:400;color:#12272e;letter-spacing:-0.6px;white-space:pre;line-height:normal;-webkit-text-stroke:0.35px #12272e;transform-origin:0 22.5px;transform:scaleY(1.07);">50808 → 443 [ACK] Seq=3011 Ack=157 Win=131648 Len=1448 TSval=23504…</div>
<div style="position:absolute;left:2px;top:790px;width:3098px;height:36px;background:#e4ffc7;"></div>
<div style="position:absolute;left:153.9px;top:791.52px;font-family:'Liberation Mono', monospace;font-size:27px;font-weight:400;color:#12272e;letter-spacing:-0.6px;white-space:pre;line-height:normal;-webkit-text-stroke:0.35px #12272e;transform-origin:0 22.5px;transform:scaleY(1.07);">515688</div>
<div style="position:absolute;left:268.5px;top:791.52px;font-family:'Liberation Mono', monospace;font-size:27px;font-weight:400;color:#12272e;letter-spacing:-0.6px;white-space:pre;line-height:normal;-webkit-text-stroke:0.35px #12272e;transform-origin:0 22.5px;transform:scaleY(1.07);">1872.267648</div>
<div style="position:absolute;left:490px;top:791.52px;font-family:'Liberation Mono', monospace;font-size:27px;font-weight:400;color:#12272e;letter-spacing:-0.6px;white-space:pre;line-height:normal;-webkit-text-stroke:0.35px #12272e;transform-origin:0 22.5px;transform:scaleY(1.07);">172.19.0.1</div>
<div style="position:absolute;left:723px;top:791.52px;font-family:'Liberation Mono', monospace;font-size:27px;font-weight:400;color:#12272e;letter-spacing:-0.6px;white-space:pre;line-height:normal;-webkit-text-stroke:0.35px #12272e;transform-origin:0 22.5px;transform:scaleY(1.07);">yue.k12media.cn</div>
<div style="position:absolute;left:1059px;top:791.52px;font-family:'Liberation Mono', monospace;font-size:27px;font-weight:400;color:#12272e;letter-spacing:-0.6px;white-space:pre;line-height:normal;-webkit-text-stroke:0.35px #12272e;transform-origin:0 22.5px;transform:scaleY(1.07);">HTTP</div>
<div style="position:absolute;left:1232.7px;top:791.52px;font-family:'Liberation Mono', monospace;font-size:27px;font-weight:400;color:#12272e;letter-spacing:-0.6px;white-space:pre;line-height:normal;-webkit-text-stroke:0.35px #12272e;transform-origin:0 22.5px;transform:scaleY(1.07);">170</div>
<div style="position:absolute;left:1378.6px;top:791.52px;font-family:'Liberation Mono', monospace;font-size:27px;font-weight:400;color:#12272e;letter-spacing:-0.6px;white-space:pre;line-height:normal;-webkit-text-stroke:0.35px #12272e;transform-origin:0 22.5px;transform:scaleY(1.07);">6777</div>
<div style="position:absolute;left:1462px;top:791.52px;font-family:'Liberation Mono', monospace;font-size:27px;font-weight:400;color:#12272e;letter-spacing:-0.6px;white-space:pre;line-height:normal;-webkit-text-stroke:0.35px #12272e;transform-origin:0 22.5px;transform:scaleY(1.07);">POST /tqms_image_server/DemoAction.a?showMaxImg HTTP/1.1  (applica…</div>
<div style="position:absolute;left:2629px;top:791.52px;font-family:'Liberation Mono', monospace;font-size:27px;font-weight:400;color:#12272e;letter-spacing:-0.6px;white-space:pre;line-height:normal;-webkit-text-stroke:0.35px #12272e;transform-origin:0 22.5px;transform:scaleY(1.07);">yue.…</div>
<div style="position:absolute;left:2px;top:826px;width:3098px;height:36px;background:#e7e6ff;"></div>
<div style="position:absolute;left:153.9px;top:827.52px;font-family:'Liberation Mono', monospace;font-size:27px;font-weight:400;color:#12272e;letter-spacing:-0.6px;white-space:pre;line-height:normal;-webkit-text-stroke:0.35px #12272e;transform-origin:0 22.5px;transform:scaleY(1.07);">515689</div>
<div style="position:absolute;left:268.5px;top:827.52px;font-family:'Liberation Mono', monospace;font-size:27px;font-weight:400;color:#12272e;letter-spacing:-0.6px;white-space:pre;line-height:normal;-webkit-text-stroke:0.35px #12272e;transform-origin:0 22.5px;transform:scaleY(1.07);">1872.267733</div>
<div style="position:absolute;left:490px;top:827.52px;font-family:'Liberation Mono', monospace;font-size:27px;font-weight:400;color:#12272e;letter-spacing:-0.6px;white-space:pre;line-height:normal;-webkit-text-stroke:0.35px #12272e;transform-origin:0 22.5px;transform:scaleY(1.07);">yue.k12media…</div>
<div style="position:absolute;left:723px;top:827.52px;font-family:'Liberation Mono', monospace;font-size:27px;font-weight:400;color:#12272e;letter-spacing:-0.6px;white-space:pre;line-height:normal;-webkit-text-stroke:0.35px #12272e;transform-origin:0 22.5px;transform:scaleY(1.07);">172.19.0.1</div>
<div style="position:absolute;left:1059px;top:827.52px;font-family:'Liberation Mono', monospace;font-size:27px;font-weight:400;color:#12272e;letter-spacing:-0.6px;white-space:pre;line-height:normal;-webkit-text-stroke:0.35px #12272e;transform-origin:0 22.5px;transform:scaleY(1.07);">TCP</div>
<div style="position:absolute;left:1263.9px;top:827.52px;font-family:'Liberation Mono', monospace;font-size:27px;font-weight:400;color:#12272e;letter-spacing:-0.6px;white-space:pre;line-height:normal;-webkit-text-stroke:0.35px #12272e;transform-origin:0 22.5px;transform:scaleY(1.07);">0</div>
<div style="position:absolute;left:1378.6px;top:827.52px;font-family:'Liberation Mono', monospace;font-size:27px;font-weight:400;color:#12272e;letter-spacing:-0.6px;white-space:pre;line-height:normal;-webkit-text-stroke:0.35px #12272e;transform-origin:0 22.5px;transform:scaleY(1.07);">6777</div>
<div style="position:absolute;left:1462px;top:827.52px;font-family:'Liberation Mono', monospace;font-size:27px;font-weight:400;color:#12272e;letter-spacing:-0.6px;white-space:pre;line-height:normal;-webkit-text-stroke:0.35px #12272e;transform-origin:0 22.5px;transform:scaleY(1.07);">443 → 50808 [ACK] Seq=157 Ack=2081 Win=131072 Len=0 TSval=16290944…</div>
<div style="position:absolute;left:2856.5px;top:827.52px;font-family:'Liberation Mono', monospace;font-size:27px;font-weight:400;color:#12272e;letter-spacing:-0.6px;white-space:pre;line-height:normal;-webkit-text-stroke:0.35px #12272e;transform-origin:0 22.5px;transform:scaleY(1.07);">Beijing, CN</div>
<div style="position:absolute;left:2px;top:862px;width:3098px;height:36px;background:#e7e6ff;"></div>
<div style="position:absolute;left:153.9px;top:863.52px;font-family:'Liberation Mono', monospace;font-size:27px;font-weight:400;color:#12272e;letter-spacing:-0.6px;white-space:pre;line-height:normal;-webkit-text-stroke:0.35px #12272e;transform-origin:0 22.5px;transform:scaleY(1.07);">515694</div>
<div style="position:absolute;left:268.5px;top:863.52px;font-family:'Liberation Mono', monospace;font-size:27px;font-weight:400;color:#12272e;letter-spacing:-0.6px;white-space:pre;line-height:normal;-webkit-text-stroke:0.35px #12272e;transform-origin:0 22.5px;transform:scaleY(1.07);">1872.268002</div>
<div style="position:absolute;left:490px;top:863.52px;font-family:'Liberation Mono', monospace;font-size:27px;font-weight:400;color:#12272e;letter-spacing:-0.6px;white-space:pre;line-height:normal;-webkit-text-stroke:0.35px #12272e;transform-origin:0 22.5px;transform:scaleY(1.07);">yue.k12media…</div>
<div style="position:absolute;left:723px;top:863.52px;font-family:'Liberation Mono', monospace;font-size:27px;font-weight:400;color:#12272e;letter-spacing:-0.6px;white-space:pre;line-height:normal;-webkit-text-stroke:0.35px #12272e;transform-origin:0 22.5px;transform:scaleY(1.07);">172.19.0.1</div>
<div style="position:absolute;left:1059px;top:863.52px;font-family:'Liberation Mono', monospace;font-size:27px;font-weight:400;color:#12272e;letter-spacing:-0.6px;white-space:pre;line-height:normal;-webkit-text-stroke:0.35px #12272e;transform-origin:0 22.5px;transform:scaleY(1.07);">TCP</div>
<div style="position:absolute;left:1263.9px;top:863.52px;font-family:'Liberation Mono', monospace;font-size:27px;font-weight:400;color:#12272e;letter-spacing:-0.6px;white-space:pre;line-height:normal;-webkit-text-stroke:0.35px #12272e;transform-origin:0 22.5px;transform:scaleY(1.07);">0</div>
<div style="position:absolute;left:1378.6px;top:863.52px;font-family:'Liberation Mono', monospace;font-size:27px;font-weight:400;color:#12272e;letter-spacing:-0.6px;white-space:pre;line-height:normal;-webkit-text-stroke:0.35px #12272e;transform-origin:0 22.5px;transform:scaleY(1.07);">6777</div>
<div style="position:absolute;left:1462px;top:863.52px;font-family:'Liberation Mono', monospace;font-size:27px;font-weight:400;color:#12272e;letter-spacing:-0.6px;white-space:pre;line-height:normal;-webkit-text-stroke:0.35px #12272e;transform-origin:0 22.5px;transform:scaleY(1.07);">443 → 50808 [ACK] Seq=157 Ack=4629 Win=128576 Len=0 TSval=16290944…</div>
<div style="position:absolute;left:2856.5px;top:863.52px;font-family:'Liberation Mono', monospace;font-size:27px;font-weight:400;color:#12272e;letter-spacing:-0.6px;white-space:pre;line-height:normal;-webkit-text-stroke:0.35px #12272e;transform-origin:0 22.5px;transform:scaleY(1.07);">Beijing, CN</div>
<div style="position:absolute;left:2px;top:898px;width:3098px;height:36px;background:#e7e6ff;"></div>
<div style="position:absolute;left:153.9px;top:899.52px;font-family:'Liberation Mono', monospace;font-size:27px;font-weight:400;color:#12272e;letter-spacing:-0.6px;white-space:pre;line-height:normal;-webkit-text-stroke:0.35px #12272e;transform-origin:0 22.5px;transform:scaleY(1.07);">516307</div>
<div style="position:absolute;left:268.5px;top:899.52px;font-family:'Liberation Mono', monospace;font-size:27px;font-weight:400;color:#12272e;letter-spacing:-0.6px;white-space:pre;line-height:normal;-webkit-text-stroke:0.35px #12272e;transform-origin:0 22.5px;transform:scaleY(1.07);">1872.834228</div>
<div style="position:absolute;left:490px;top:899.52px;font-family:'Liberation Mono', monospace;font-size:27px;font-weight:400;color:#12272e;letter-spacing:-0.6px;white-space:pre;line-height:normal;-webkit-text-stroke:0.35px #12272e;transform-origin:0 22.5px;transform:scaleY(1.07);">yue.k12media…</div>
<div style="position:absolute;left:723px;top:899.52px;font-family:'Liberation Mono', monospace;font-size:27px;font-weight:400;color:#12272e;letter-spacing:-0.6px;white-space:pre;line-height:normal;-webkit-text-stroke:0.35px #12272e;transform-origin:0 22.5px;transform:scaleY(1.07);">172.19.0.1</div>
<div style="position:absolute;left:1059px;top:899.52px;font-family:'Liberation Mono', monospace;font-size:27px;font-weight:400;color:#12272e;letter-spacing:-0.6px;white-space:pre;line-height:normal;-webkit-text-stroke:0.35px #12272e;transform-origin:0 22.5px;transform:scaleY(1.07);">TCP</div>
<div style="position:absolute;left:1232.7px;top:899.52px;font-family:'Liberation Mono', monospace;font-size:27px;font-weight:400;color:#12272e;letter-spacing:-0.6px;white-space:pre;line-height:normal;-webkit-text-stroke:0.35px #12272e;transform-origin:0 22.5px;transform:scaleY(1.07);">14…</div>
<div style="position:absolute;left:1378.6px;top:899.52px;font-family:'Liberation Mono', monospace;font-size:27px;font-weight:400;color:#12272e;letter-spacing:-0.6px;white-space:pre;line-height:normal;-webkit-text-stroke:0.35px #12272e;transform-origin:0 22.5px;transform:scaleY(1.07);">6777</div>
<div style="position:absolute;left:1462px;top:899.52px;font-family:'Liberation Mono', monospace;font-size:27px;font-weight:400;color:#12272e;letter-spacing:-0.6px;white-space:pre;line-height:normal;-webkit-text-stroke:0.35px #12272e;transform-origin:0 22.5px;transform:scaleY(1.07);">443 → 50808 [ACK] Seq=157 Ack=4629 Win=131072 Len=1448 TSval=16290…</div>
<div style="position:absolute;left:2856.5px;top:899.52px;font-family:'Liberation Mono', monospace;font-size:27px;font-weight:400;color:#12272e;letter-spacing:-0.6px;white-space:pre;line-height:normal;-webkit-text-stroke:0.35px #12272e;transform-origin:0 22.5px;transform:scaleY(1.07);">Beijing, CN</div>
<div style="position:absolute;left:2px;top:934px;width:3098px;height:36px;background:#e7e6ff;"></div>
<div style="position:absolute;left:153.9px;top:935.52px;font-family:'Liberation Mono', monospace;font-size:27px;font-weight:400;color:#12272e;letter-spacing:-0.6px;white-space:pre;line-height:normal;-webkit-text-stroke:0.35px #12272e;transform-origin:0 22.5px;transform:scaleY(1.07);">516308</div>
<div style="position:absolute;left:268.5px;top:935.52px;font-family:'Liberation Mono', monospace;font-size:27px;font-weight:400;color:#12272e;letter-spacing:-0.6px;white-space:pre;line-height:normal;-webkit-text-stroke:0.35px #12272e;transform-origin:0 22.5px;transform:scaleY(1.07);">1872.834256</div>
<div style="position:absolute;left:490px;top:935.52px;font-family:'Liberation Mono', monospace;font-size:27px;font-weight:400;color:#12272e;letter-spacing:-0.6px;white-space:pre;line-height:normal;-webkit-text-stroke:0.35px #12272e;transform-origin:0 22.5px;transform:scaleY(1.07);">yue.k12media…</div>
<div style="position:absolute;left:723px;top:935.52px;font-family:'Liberation Mono', monospace;font-size:27px;font-weight:400;color:#12272e;letter-spacing:-0.6px;white-space:pre;line-height:normal;-webkit-text-stroke:0.35px #12272e;transform-origin:0 22.5px;transform:scaleY(1.07);">172.19.0.1</div>
<div style="position:absolute;left:1059px;top:935.52px;font-family:'Liberation Mono', monospace;font-size:27px;font-weight:400;color:#12272e;letter-spacing:-0.6px;white-space:pre;line-height:normal;-webkit-text-stroke:0.35px #12272e;transform-origin:0 22.5px;transform:scaleY(1.07);">TCP</div>
<div style="position:absolute;left:1232.7px;top:935.52px;font-family:'Liberation Mono', monospace;font-size:27px;font-weight:400;color:#12272e;letter-spacing:-0.6px;white-space:pre;line-height:normal;-webkit-text-stroke:0.35px #12272e;transform-origin:0 22.5px;transform:scaleY(1.07);">14…</div>
<div style="position:absolute;left:1378.6px;top:935.52px;font-family:'Liberation Mono', monospace;font-size:27px;font-weight:400;color:#12272e;letter-spacing:-0.6px;white-space:pre;line-height:normal;-webkit-text-stroke:0.35px #12272e;transform-origin:0 22.5px;transform:scaleY(1.07);">6777</div>
<div style="position:absolute;left:1462px;top:935.52px;font-family:'Liberation Mono', monospace;font-size:27px;font-weight:400;color:#12272e;letter-spacing:-0.6px;white-space:pre;line-height:normal;-webkit-text-stroke:0.35px #12272e;transform-origin:0 22.5px;transform:scaleY(1.07);">443 → 50808 [ACK] Seq=1605 Ack=4629 Win=131072 Len=1448 TSval=1629…</div>
<div style="position:absolute;left:2856.5px;top:935.52px;font-family:'Liberation Mono', monospace;font-size:27px;font-weight:400;color:#12272e;letter-spacing:-0.6px;white-space:pre;line-height:normal;-webkit-text-stroke:0.35px #12272e;transform-origin:0 22.5px;transform:scaleY(1.07);">Beijing, CN</div>
<div style="position:absolute;left:2px;top:970px;width:3098px;height:36px;background:#0a49da;"></div>
<div style="position:absolute;left:153.9px;top:971.52px;font-family:'Liberation Mono', monospace;font-size:27px;font-weight:400;color:#fff;letter-spacing:-0.6px;white-space:pre;line-height:normal;-webkit-text-stroke:0.35px #fff;transform-origin:0 22.5px;transform:scaleY(1.07);">516309</div>
<div style="position:absolute;left:268.5px;top:971.52px;font-family:'Liberation Mono', monospace;font-size:27px;font-weight:400;color:#fff;letter-spacing:-0.6px;white-space:pre;line-height:normal;-webkit-text-stroke:0.35px #fff;transform-origin:0 22.5px;transform:scaleY(1.07);">1872.834258</div>
<div style="position:absolute;left:490px;top:971.52px;font-family:'Liberation Mono', monospace;font-size:27px;font-weight:400;color:#fff;letter-spacing:-0.6px;white-space:pre;line-height:normal;-webkit-text-stroke:0.35px #fff;transform-origin:0 22.5px;transform:scaleY(1.07);">yue.k12media…</div>
<div style="position:absolute;left:723px;top:971.52px;font-family:'Liberation Mono', monospace;font-size:27px;font-weight:400;color:#fff;letter-spacing:-0.6px;white-space:pre;line-height:normal;-webkit-text-stroke:0.35px #fff;transform-origin:0 22.5px;transform:scaleY(1.07);">172.19.0.1</div>
<div style="position:absolute;left:1059px;top:971.52px;font-family:'Liberation Mono', monospace;font-size:27px;font-weight:400;color:#fff;letter-spacing:-0.6px;white-space:pre;line-height:normal;-webkit-text-stroke:0.35px #fff;transform-origin:0 22.5px;transform:scaleY(1.07);">HTTP</div>
<div style="position:absolute;left:1232.7px;top:971.52px;font-family:'Liberation Mono', monospace;font-size:27px;font-weight:400;color:#fff;letter-spacing:-0.6px;white-space:pre;line-height:normal;-webkit-text-stroke:0.35px #fff;transform-origin:0 22.5px;transform:scaleY(1.07);">901</div>
<div style="position:absolute;left:1378.6px;top:971.52px;font-family:'Liberation Mono', monospace;font-size:27px;font-weight:400;color:#fff;letter-spacing:-0.6px;white-space:pre;line-height:normal;-webkit-text-stroke:0.35px #fff;transform-origin:0 22.5px;transform:scaleY(1.07);">6777</div>
<div style="position:absolute;left:1462px;top:971.52px;font-family:'Liberation Mono', monospace;font-size:27px;font-weight:400;color:#fff;letter-spacing:-0.6px;white-space:pre;line-height:normal;-webkit-text-stroke:0.35px #fff;transform-origin:0 22.5px;transform:scaleY(1.07);">HTTP/1.1 200 OK  (text/html), Alert (Level: Warning, Description: …</div>
<div style="position:absolute;left:2856.5px;top:971.52px;font-family:'Liberation Mono', monospace;font-size:27px;font-weight:400;color:#fff;letter-spacing:-0.6px;white-space:pre;line-height:normal;-webkit-text-stroke:0.35px #fff;transform-origin:0 22.5px;transform:scaleY(1.07);">Beijing, CN</div>
<div style="position:absolute;left:2px;top:1006px;width:3098px;height:36px;background:#a0a0a0;"></div>
<div style="position:absolute;left:153.9px;top:1007.52px;font-family:'Liberation Mono', monospace;font-size:27px;font-weight:400;color:#12272e;letter-spacing:-0.6px;white-space:pre;line-height:normal;-webkit-text-stroke:0.35px #12272e;transform-origin:0 22.5px;transform:scaleY(1.07);">516310</div>
<div style="position:absolute;left:268.5px;top:1007.52px;font-family:'Liberation Mono', monospace;font-size:27px;font-weight:400;color:#12272e;letter-spacing:-0.6px;white-space:pre;line-height:normal;-webkit-text-stroke:0.35px #12272e;transform-origin:0 22.5px;transform:scaleY(1.07);">1872.834259</div>
<div style="position:absolute;left:490px;top:1007.52px;font-family:'Liberation Mono', monospace;font-size:27px;font-weight:400;color:#12272e;letter-spacing:-0.6px;white-space:pre;line-height:normal;-webkit-text-stroke:0.35px #12272e;transform-origin:0 22.5px;transform:scaleY(1.07);">yue.k12media…</div>
<div style="position:absolute;left:723px;top:1007.52px;font-family:'Liberation Mono', monospace;font-size:27px;font-weight:400;color:#12272e;letter-spacing:-0.6px;white-space:pre;line-height:normal;-webkit-text-stroke:0.35px #12272e;transform-origin:0 22.5px;transform:scaleY(1.07);">172.19.0.1</div>
<div style="position:absolute;left:1059px;top:1007.52px;font-family:'Liberation Mono', monospace;font-size:27px;font-weight:400;color:#12272e;letter-spacing:-0.6px;white-space:pre;line-height:normal;-webkit-text-stroke:0.35px #12272e;transform-origin:0 22.5px;transform:scaleY(1.07);">TCP</div>
<div style="position:absolute;left:1263.9px;top:1007.52px;font-family:'Liberation Mono', monospace;font-size:27px;font-weight:400;color:#12272e;letter-spacing:-0.6px;white-space:pre;line-height:normal;-webkit-text-stroke:0.35px #12272e;transform-origin:0 22.5px;transform:scaleY(1.07);">0</div>
<div style="position:absolute;left:1378.6px;top:1007.52px;font-family:'Liberation Mono', monospace;font-size:27px;font-weight:400;color:#12272e;letter-spacing:-0.6px;white-space:pre;line-height:normal;-webkit-text-stroke:0.35px #12272e;transform-origin:0 22.5px;transform:scaleY(1.07);">6777</div>
<div style="position:absolute;left:1462px;top:1007.52px;font-family:'Liberation Mono', monospace;font-size:27px;font-weight:400;color:#12272e;letter-spacing:-0.6px;white-space:pre;line-height:normal;-webkit-text-stroke:0.35px #12272e;transform-origin:0 22.5px;transform:scaleY(1.07);">443 → 50808 [FIN, ACK] Seq=3954 Ack=4629 Win=131072 Len=0 TSval=16…</div>
<div style="position:absolute;left:2856.5px;top:1007.52px;font-family:'Liberation Mono', monospace;font-size:27px;font-weight:400;color:#12272e;letter-spacing:-0.6px;white-space:pre;line-height:normal;-webkit-text-stroke:0.35px #12272e;transform-origin:0 22.5px;transform:scaleY(1.07);">Beijing, CN</div>
<div style="position:absolute;left:2px;top:1042px;width:3098px;height:36px;background:#e7e6ff;"></div>
<div style="position:absolute;left:153.9px;top:1043.52px;font-family:'Liberation Mono', monospace;font-size:27px;font-weight:400;color:#12272e;letter-spacing:-0.6px;white-space:pre;line-height:normal;-webkit-text-stroke:0.35px #12272e;transform-origin:0 22.5px;transform:scaleY(1.07);">516311</div>
<div style="position:absolute;left:268.5px;top:1043.52px;font-family:'Liberation Mono', monospace;font-size:27px;font-weight:400;color:#12272e;letter-spacing:-0.6px;white-space:pre;line-height:normal;-webkit-text-stroke:0.35px #12272e;transform-origin:0 22.5px;transform:scaleY(1.07);">1872.834331</div>
<div style="position:absolute;left:490px;top:1043.52px;font-family:'Liberation Mono', monospace;font-size:27px;font-weight:400;color:#12272e;letter-spacing:-0.6px;white-space:pre;line-height:normal;-webkit-text-stroke:0.35px #12272e;transform-origin:0 22.5px;transform:scaleY(1.07);">172.19.0.1</div>
<div style="position:absolute;left:723px;top:1043.52px;font-family:'Liberation Mono', monospace;font-size:27px;font-weight:400;color:#12272e;letter-spacing:-0.6px;white-space:pre;line-height:normal;-webkit-text-stroke:0.35px #12272e;transform-origin:0 22.5px;transform:scaleY(1.07);">yue.k12media.cn</div>
<div style="position:absolute;left:1059px;top:1043.52px;font-family:'Liberation Mono', monospace;font-size:27px;font-weight:400;color:#12272e;letter-spacing:-0.6px;white-space:pre;line-height:normal;-webkit-text-stroke:0.35px #12272e;transform-origin:0 22.5px;transform:scaleY(1.07);">TCP</div>
<div style="position:absolute;left:1263.9px;top:1043.52px;font-family:'Liberation Mono', monospace;font-size:27px;font-weight:400;color:#12272e;letter-spacing:-0.6px;white-space:pre;line-height:normal;-webkit-text-stroke:0.35px #12272e;transform-origin:0 22.5px;transform:scaleY(1.07);">0</div>
<div style="position:absolute;left:1378.6px;top:1043.52px;font-family:'Liberation Mono', monospace;font-size:27px;font-weight:400;color:#12272e;letter-spacing:-0.6px;white-space:pre;line-height:normal;-webkit-text-stroke:0.35px #12272e;transform-origin:0 22.5px;transform:scaleY(1.07);">6777</div>
<div style="position:absolute;left:1462px;top:1043.52px;font-family:'Liberation Mono', monospace;font-size:27px;font-weight:400;color:#12272e;letter-spacing:-0.6px;white-space:pre;line-height:normal;-webkit-text-stroke:0.35px #12272e;transform-origin:0 22.5px;transform:scaleY(1.07);">50808 → 443 [ACK] Seq=4629 Ack=1605 Win=130240 Len=0 TSval=2350490…</div>
<div style="position:absolute;left:2px;top:1078px;width:3098px;height:36px;background:#e7e6ff;"></div>
<div style="position:absolute;left:153.9px;top:1079.52px;font-family:'Liberation Mono', monospace;font-size:27px;font-weight:400;color:#12272e;letter-spacing:-0.6px;white-space:pre;line-height:normal;-webkit-text-stroke:0.35px #12272e;transform-origin:0 22.5px;transform:scaleY(1.07);">516312</div>
<div style="position:absolute;left:268.5px;top:1079.52px;font-family:'Liberation Mono', monospace;font-size:27px;font-weight:400;color:#12272e;letter-spacing:-0.6px;white-space:pre;line-height:normal;-webkit-text-stroke:0.35px #12272e;transform-origin:0 22.5px;transform:scaleY(1.07);">1872.834351</div>
<div style="position:absolute;left:490px;top:1079.52px;font-family:'Liberation Mono', monospace;font-size:27px;font-weight:400;color:#12272e;letter-spacing:-0.6px;white-space:pre;line-height:normal;-webkit-text-stroke:0.35px #12272e;transform-origin:0 22.5px;transform:scaleY(1.07);">172.19.0.1</div>
<div style="position:absolute;left:723px;top:1079.52px;font-family:'Liberation Mono', monospace;font-size:27px;font-weight:400;color:#12272e;letter-spacing:-0.6px;white-space:pre;line-height:normal;-webkit-text-stroke:0.35px #12272e;transform-origin:0 22.5px;transform:scaleY(1.07);">yue.k12media.cn</div>
<div style="position:absolute;left:1059px;top:1079.52px;font-family:'Liberation Mono', monospace;font-size:27px;font-weight:400;color:#12272e;letter-spacing:-0.6px;white-space:pre;line-height:normal;-webkit-text-stroke:0.35px #12272e;transform-origin:0 22.5px;transform:scaleY(1.07);">TCP</div>
<div style="position:absolute;left:1263.9px;top:1079.52px;font-family:'Liberation Mono', monospace;font-size:27px;font-weight:400;color:#12272e;letter-spacing:-0.6px;white-space:pre;line-height:normal;-webkit-text-stroke:0.35px #12272e;transform-origin:0 22.5px;transform:scaleY(1.07);">0</div>
<div style="position:absolute;left:1378.6px;top:1079.52px;font-family:'Liberation Mono', monospace;font-size:27px;font-weight:400;color:#12272e;letter-spacing:-0.6px;white-space:pre;line-height:normal;-webkit-text-stroke:0.35px #12272e;transform-origin:0 22.5px;transform:scaleY(1.07);">6777</div>
<div style="position:absolute;left:1462px;top:1079.52px;font-family:'Liberation Mono', monospace;font-size:27px;font-weight:400;color:#12272e;letter-spacing:-0.6px;white-space:pre;line-height:normal;-webkit-text-stroke:0.35px #12272e;transform-origin:0 22.5px;transform:scaleY(1.07);">50808 → 443 [ACK] Seq=4629 Ack=3954 Win=127936 Len=0 TSval=2350490…</div>
<div style="position:absolute;left:2px;top:1114px;width:3098px;height:36px;background:#e7e6ff;"></div>
<div style="position:absolute;left:153.9px;top:1115.52px;font-family:'Liberation Mono', monospace;font-size:27px;font-weight:400;color:#12272e;letter-spacing:-0.6px;white-space:pre;line-height:normal;-webkit-text-stroke:0.35px #12272e;transform-origin:0 22.5px;transform:scaleY(1.07);">516315</div>
<div style="position:absolute;left:268.5px;top:1115.52px;font-family:'Liberation Mono', monospace;font-size:27px;font-weight:400;color:#12272e;letter-spacing:-0.6px;white-space:pre;line-height:normal;-webkit-text-stroke:0.35px #12272e;transform-origin:0 22.5px;transform:scaleY(1.07);">1872.834378</div>
<div style="position:absolute;left:490px;top:1115.52px;font-family:'Liberation Mono', monospace;font-size:27px;font-weight:400;color:#12272e;letter-spacing:-0.6px;white-space:pre;line-height:normal;-webkit-text-stroke:0.35px #12272e;transform-origin:0 22.5px;transform:scaleY(1.07);">172.19.0.1</div>
<div style="position:absolute;left:723px;top:1115.52px;font-family:'Liberation Mono', monospace;font-size:27px;font-weight:400;color:#12272e;letter-spacing:-0.6px;white-space:pre;line-height:normal;-webkit-text-stroke:0.35px #12272e;transform-origin:0 22.5px;transform:scaleY(1.07);">yue.k12media.cn</div>
<div style="position:absolute;left:1059px;top:1115.52px;font-family:'Liberation Mono', monospace;font-size:27px;font-weight:400;color:#12272e;letter-spacing:-0.6px;white-space:pre;line-height:normal;-webkit-text-stroke:0.35px #12272e;transform-origin:0 22.5px;transform:scaleY(1.07);">TCP</div>
<div style="position:absolute;left:1263.9px;top:1115.52px;font-family:'Liberation Mono', monospace;font-size:27px;font-weight:400;color:#12272e;letter-spacing:-0.6px;white-space:pre;line-height:normal;-webkit-text-stroke:0.35px #12272e;transform-origin:0 22.5px;transform:scaleY(1.07);">0</div>
<div style="position:absolute;left:1378.6px;top:1115.52px;font-family:'Liberation Mono', monospace;font-size:27px;font-weight:400;color:#12272e;letter-spacing:-0.6px;white-space:pre;line-height:normal;-webkit-text-stroke:0.35px #12272e;transform-origin:0 22.5px;transform:scaleY(1.07);">6777</div>
<div style="position:absolute;left:1462px;top:1115.52px;font-family:'Liberation Mono', monospace;font-size:27px;font-weight:400;color:#12272e;letter-spacing:-0.6px;white-space:pre;line-height:normal;-webkit-text-stroke:0.35px #12272e;transform-origin:0 22.5px;transform:scaleY(1.07);">50808 → 443 [ACK] Seq=4629 Ack=3955 Win=127936 Len=0 TSval=2350490…</div>
<div style="position:absolute;left:2px;top:1150px;width:3098px;height:36px;background:#e7e6ff;"></div>
<div style="position:absolute;left:153.9px;top:1151.52px;font-family:'Liberation Mono', monospace;font-size:27px;font-weight:400;color:#12272e;letter-spacing:-0.6px;white-space:pre;line-height:normal;-webkit-text-stroke:0.35px #12272e;transform-origin:0 22.5px;transform:scaleY(1.07);">516317</div>
<div style="position:absolute;left:268.5px;top:1151.52px;font-family:'Liberation Mono', monospace;font-size:27px;font-weight:400;color:#12272e;letter-spacing:-0.6px;white-space:pre;line-height:normal;-webkit-text-stroke:0.35px #12272e;transform-origin:0 22.5px;transform:scaleY(1.07);">1872.834423</div>
<div style="position:absolute;left:490px;top:1151.52px;font-family:'Liberation Mono', monospace;font-size:27px;font-weight:400;color:#12272e;letter-spacing:-0.6px;white-space:pre;line-height:normal;-webkit-text-stroke:0.35px #12272e;transform-origin:0 22.5px;transform:scaleY(1.07);">172.19.0.1</div>
<div style="position:absolute;left:723px;top:1151.52px;font-family:'Liberation Mono', monospace;font-size:27px;font-weight:400;color:#12272e;letter-spacing:-0.6px;white-space:pre;line-height:normal;-webkit-text-stroke:0.35px #12272e;transform-origin:0 22.5px;transform:scaleY(1.07);">yue.k12media.cn</div>
<div style="position:absolute;left:1059px;top:1151.52px;font-family:'Liberation Mono', monospace;font-size:27px;font-weight:400;color:#12272e;letter-spacing:-0.6px;white-space:pre;line-height:normal;-webkit-text-stroke:0.35px #12272e;transform-origin:0 22.5px;transform:scaleY(1.07);">TCP</div>
<div style="position:absolute;left:1263.9px;top:1151.52px;font-family:'Liberation Mono', monospace;font-size:27px;font-weight:400;color:#12272e;letter-spacing:-0.6px;white-space:pre;line-height:normal;-webkit-text-stroke:0.35px #12272e;transform-origin:0 22.5px;transform:scaleY(1.07);">0</div>
<div style="position:absolute;left:1378.6px;top:1151.52px;font-family:'Liberation Mono', monospace;font-size:27px;font-weight:400;color:#12272e;letter-spacing:-0.6px;white-space:pre;line-height:normal;-webkit-text-stroke:0.35px #12272e;transform-origin:0 22.5px;transform:scaleY(1.07);">6777</div>
<div style="position:absolute;left:1462px;top:1151.52px;font-family:'Liberation Mono', monospace;font-size:27px;font-weight:400;color:#12272e;letter-spacing:-0.6px;white-space:pre;line-height:normal;-webkit-text-stroke:0.35px #12272e;transform-origin:0 22.5px;transform:scaleY(1.07);">[TCP Window Update] 50808 → 443 [ACK] Seq=4629 Ack=3955 Win=131072…</div>
<div style="position:absolute;left:2px;top:1186px;width:3098px;height:36px;background:#a0a0a0;"></div>
<div style="position:absolute;left:153.9px;top:1187.52px;font-family:'Liberation Mono', monospace;font-size:27px;font-weight:400;color:#12272e;letter-spacing:-0.6px;white-space:pre;line-height:normal;-webkit-text-stroke:0.35px #12272e;transform-origin:0 22.5px;transform:scaleY(1.07);">516319</div>
<div style="position:absolute;left:268.5px;top:1187.52px;font-family:'Liberation Mono', monospace;font-size:27px;font-weight:400;color:#12272e;letter-spacing:-0.6px;white-space:pre;line-height:normal;-webkit-text-stroke:0.35px #12272e;transform-origin:0 22.5px;transform:scaleY(1.07);">1872.837687</div>
<div style="position:absolute;left:490px;top:1187.52px;font-family:'Liberation Mono', monospace;font-size:27px;font-weight:400;color:#12272e;letter-spacing:-0.6px;white-space:pre;line-height:normal;-webkit-text-stroke:0.35px #12272e;transform-origin:0 22.5px;transform:scaleY(1.07);">172.19.0.1</div>
<div style="position:absolute;left:723px;top:1187.52px;font-family:'Liberation Mono', monospace;font-size:27px;font-weight:400;color:#12272e;letter-spacing:-0.6px;white-space:pre;line-height:normal;-webkit-text-stroke:0.35px #12272e;transform-origin:0 22.5px;transform:scaleY(1.07);">yue.k12media.cn</div>
<div style="position:absolute;left:1059px;top:1187.52px;font-family:'Liberation Mono', monospace;font-size:27px;font-weight:400;color:#12272e;letter-spacing:-0.6px;white-space:pre;line-height:normal;-webkit-text-stroke:0.35px #12272e;transform-origin:0 22.5px;transform:scaleY(1.07);">TCP</div>
<div style="position:absolute;left:1263.9px;top:1187.52px;font-family:'Liberation Mono', monospace;font-size:27px;font-weight:400;color:#12272e;letter-spacing:-0.6px;white-space:pre;line-height:normal;-webkit-text-stroke:0.35px #12272e;transform-origin:0 22.5px;transform:scaleY(1.07);">0</div>
<div style="position:absolute;left:1378.6px;top:1187.52px;font-family:'Liberation Mono', monospace;font-size:27px;font-weight:400;color:#12272e;letter-spacing:-0.6px;white-space:pre;line-height:normal;-webkit-text-stroke:0.35px #12272e;transform-origin:0 22.5px;transform:scaleY(1.07);">6777</div>
<div style="position:absolute;left:1462px;top:1187.52px;font-family:'Liberation Mono', monospace;font-size:27px;font-weight:400;color:#12272e;letter-spacing:-0.6px;white-space:pre;line-height:normal;-webkit-text-stroke:0.35px #12272e;transform-origin:0 22.5px;transform:scaleY(1.07);">50808 → 443 [FIN, ACK] Seq=4629 Ack=3955 Win=131072 Len=0 TSval=23…</div>
<div style="position:absolute;left:2px;top:1222px;width:3098px;height:36px;background:#e7e6ff;"></div>
<div style="position:absolute;left:153.9px;top:1223.52px;font-family:'Liberation Mono', monospace;font-size:27px;font-weight:400;color:#12272e;letter-spacing:-0.6px;white-space:pre;line-height:normal;-webkit-text-stroke:0.35px #12272e;transform-origin:0 22.5px;transform:scaleY(1.07);">516324</div>
<div style="position:absolute;left:268.5px;top:1223.52px;font-family:'Liberation Mono', monospace;font-size:27px;font-weight:400;color:#12272e;letter-spacing:-0.6px;white-space:pre;line-height:normal;-webkit-text-stroke:0.35px #12272e;transform-origin:0 22.5px;transform:scaleY(1.07);">1872.838031</div>
<div style="position:absolute;left:490px;top:1223.52px;font-family:'Liberation Mono', monospace;font-size:27px;font-weight:400;color:#12272e;letter-spacing:-0.6px;white-space:pre;line-height:normal;-webkit-text-stroke:0.35px #12272e;transform-origin:0 22.5px;transform:scaleY(1.07);">yue.k12media…</div>
<div style="position:absolute;left:723px;top:1223.52px;font-family:'Liberation Mono', monospace;font-size:27px;font-weight:400;color:#12272e;letter-spacing:-0.6px;white-space:pre;line-height:normal;-webkit-text-stroke:0.35px #12272e;transform-origin:0 22.5px;transform:scaleY(1.07);">172.19.0.1</div>
<div style="position:absolute;left:1059px;top:1223.52px;font-family:'Liberation Mono', monospace;font-size:27px;font-weight:400;color:#12272e;letter-spacing:-0.6px;white-space:pre;line-height:normal;-webkit-text-stroke:0.35px #12272e;transform-origin:0 22.5px;transform:scaleY(1.07);">TCP</div>
<div style="position:absolute;left:1263.9px;top:1223.52px;font-family:'Liberation Mono', monospace;font-size:27px;font-weight:400;color:#12272e;letter-spacing:-0.6px;white-space:pre;line-height:normal;-webkit-text-stroke:0.35px #12272e;transform-origin:0 22.5px;transform:scaleY(1.07);">0</div>
<div style="position:absolute;left:1378.6px;top:1223.52px;font-family:'Liberation Mono', monospace;font-size:27px;font-weight:400;color:#12272e;letter-spacing:-0.6px;white-space:pre;line-height:normal;-webkit-text-stroke:0.35px #12272e;transform-origin:0 22.5px;transform:scaleY(1.07);">6777</div>
<div style="position:absolute;left:1462px;top:1223.52px;font-family:'Liberation Mono', monospace;font-size:27px;font-weight:400;color:#12272e;letter-spacing:-0.6px;white-space:pre;line-height:normal;-webkit-text-stroke:0.35px #12272e;transform-origin:0 22.5px;transform:scaleY(1.07);">443 → 50808 [ACK] Seq=3955 Ack=4630 Win=131072 Len=0 TSval=1629094…</div>
<div style="position:absolute;left:2856.5px;top:1223.52px;font-family:'Liberation Mono', monospace;font-size:27px;font-weight:400;color:#12272e;letter-spacing:-0.6px;white-space:pre;line-height:normal;-webkit-text-stroke:0.35px #12272e;transform-origin:0 22.5px;transform:scaleY(1.07);">Beijing, CN</div>
<div style="position:absolute;left:18px;top:376px;width:2px;height:866px;background:#8a8a8a;"></div>
<div style="position:absolute;left:18px;top:376px;width:16px;height:2px;background:#8a8a8a;"></div>
<div style="position:absolute;left:18px;top:1240px;width:16px;height:2px;background:#8a8a8a;"></div>
<div style="position:absolute;left:6px;top:808px;width:20px;height:2px;background:#8a8a8a;"></div>
<svg style="position:absolute;left:25px;top:803px" width="12" height="12" viewBox="0 0 12 12"><path d="M1 1 L11 6 L1 11 Z" fill="#8a8a8a"/></svg>
<svg style="position:absolute;left:13px;top:910.5px" width="12" height="12" viewBox="0 0 12 12"><circle cx="6" cy="6" r="5" fill="#8a8a8a"/></svg>
<svg style="position:absolute;left:13px;top:946.5px" width="12" height="12" viewBox="0 0 12 12"><circle cx="6" cy="6" r="5" fill="#8a8a8a"/></svg>
<div style="position:absolute;left:18px;top:970px;width:2px;height:36px;background:#fff;"></div>
<div style="position:absolute;left:14px;top:988px;width:20px;height:2px;background:#fff;"></div>
<svg style="position:absolute;left:3px;top:983px" width="12" height="12" viewBox="0 0 12 12"><path d="M11 1 L1 6 L11 11 Z" fill="#fff"/></svg>
<div style="position:absolute;left:0px;top:321px;width:2px;height:1148px;background:#cfcfcf;"></div>
<div style="position:absolute;left:3100px;top:321px;width:2px;height:1148px;background:#cfcfcf;"></div>
<div style="position:absolute;left:0px;top:1328px;width:3102px;height:1px;background:#a9a9a9;"></div>
<div style="position:absolute;left:2px;top:1329px;width:3098px;height:15px;background:#d4d4d4;"></div>
<svg style="position:absolute;left:1545px;top:1331px" width="12" height="12" viewBox="0 0 12 12"><circle cx="6" cy="6" r="6" fill="#bcbcbc"/></svg>
<div style="position:absolute;left:0px;top:1344px;width:3102px;height:1px;background:#8f8f8f;"></div>
<div style="position:absolute;left:2px;top:1345px;width:3098px;height:69px;background:#fff;"></div>
<div style="position:absolute;left:2px;top:1345.5px;width:3000px;height:68.09999999999991px;overflow:hidden">
<div style="position:absolute;left:89px;top:7.02px;font-family:'Liberation Mono', monospace;font-size:27px;font-weight:400;color:#1e1e1e;letter-spacing:-0.6px;white-space:pre;line-height:normal;-webkit-text-stroke:0.35px #1e1e1e;transform-origin:0 22.5px;transform:scaleY(1.07);">Header Checksum: 0x0f44 [validation disabled]</div>
<div style="position:absolute;left:89px;top:42.52px;font-family:'Liberation Mono', monospace;font-size:27px;font-weight:400;color:#1e1e1e;letter-spacing:-0.6px;white-space:pre;line-height:normal;-webkit-text-stroke:0.35px #1e1e1e;transform-origin:0 22.5px;transform:scaleY(1.07);">[Header checksum status: Unverified]</div>
</div>
<div style="position:absolute;left:3082px;top:1353px;width:14px;height:48px;background:#858585;border-radius:7px;"></div>
<div style="position:absolute;left:0px;top:1414px;width:3102px;height:1px;background:#b9b9b9;"></div>
<div style="position:absolute;left:0px;top:1415px;width:3102px;height:1px;background:#d4d4d4;"></div>
<div style="position:absolute;left:0px;top:1416px;width:3102px;height:1px;background:#7b7b7b;"></div>
<div style="position:absolute;left:0px;top:1417px;width:3102px;height:54px;background:#ebebeb;"></div>
<svg style="position:absolute;left:19px;top:1428px" width="30" height="30" viewBox="0 0 30 30"><defs><radialGradient id="grc" cx="0.4" cy="0.3" r="0.75"><stop offset="0" stop-color="#ee9088"/><stop offset="1" stop-color="#e05a5e"/></radialGradient></defs><circle cx="15" cy="14" r="13" fill="url(#grc)" stroke="#6e2a2a" stroke-width="1.6"/></svg>
<svg style="position:absolute;left:70px;top:1427px" width="30" height="30" viewBox="0 0 30 30"><rect x="1.3" y="1" width="21.4" height="27.7" fill="#f3f3ef" stroke="#b4b4b4" stroke-width="1.2"/>
<defs><linearGradient id="gedh" x1="0" y1="0" x2="1" y2="0"><stop offset="0" stop-color="#5ab0e4"/><stop offset="1" stop-color="#2a96d8"/></linearGradient></defs>
<path d="M1.3 1 L16 1 Q18 1 18 3 L18 7.5 L1.3 7.5 Z" fill="url(#gedh)"/>
<path d="M7 7.5 Q8 3 12 2 Q10 5 11 7.5 Z" fill="#f3f3ef"/>
<g font-family="Liberation Mono" font-size="5.5" font-weight="700" fill="#b0b0a8"><text x="4.5" y="14">0101</text><text x="4.5" y="20">0101</text><text x="4.5" y="26">01100</text></g>
<g transform="translate(8 20.6) rotate(-42.7)">
<path d="M0 0 L6.5 -3.4 L6.5 3.4 Z" fill="#111"/>
<rect x="6.5" y="-3.4" width="14.5" height="6.8" fill="#555"/>
<rect x="21" y="-3.4" width="1.2" height="6.8" fill="#f0f0f0"/>
<path d="M22.2 -3.4 L25 -3.4 Q28 -3.4 28 0 Q28 3.4 25 3.4 L22.2 3.4 Z" fill="#555"/>
</g></svg>
<div style="position:absolute;left:138.9px;top:1430.93px;font-family:'Liberation Sans', sans-serif;font-size:23.5px;font-weight:400;color:#111;letter-spacing:0.15px;white-space:pre;line-height:normal;-webkit-text-stroke:0.25px #111;">Source Address (ip.src), 4 bytes</div>
<svg style="position:absolute;left:2049px;top:1438px" width="12" height="12" viewBox="0 0 12 12"><circle cx="6" cy="6" r="6" fill="#d0d0d0"/></svg>
<div style="position:absolute;left:2084.6px;top:1430.93px;font-family:'Liberation Sans', sans-serif;font-size:23.5px;font-weight:400;color:#1a1a1a;letter-spacing:0.15px;white-space:pre;line-height:normal;-webkit-text-stroke:0.25px #1a1a1a;">Packets: 736985 · Displayed: 25 (0.0%) · Dropped: 0 (0.0%)</div>
<svg style="position:absolute;left:2907px;top:1438px" width="12" height="12" viewBox="0 0 12 12"><circle cx="6" cy="6" r="6" fill="#d0d0d0"/></svg>
<div style="position:absolute;left:2942.9px;top:1430.93px;font-family:'Liberation Sans', sans-serif;font-size:23.5px;font-weight:400;color:#1a1a1a;letter-spacing:0.0px;white-space:pre;line-height:normal;-webkit-text-stroke:0.25px #1a1a1a;">Profile: suen</div>
</div>
</body></html>
